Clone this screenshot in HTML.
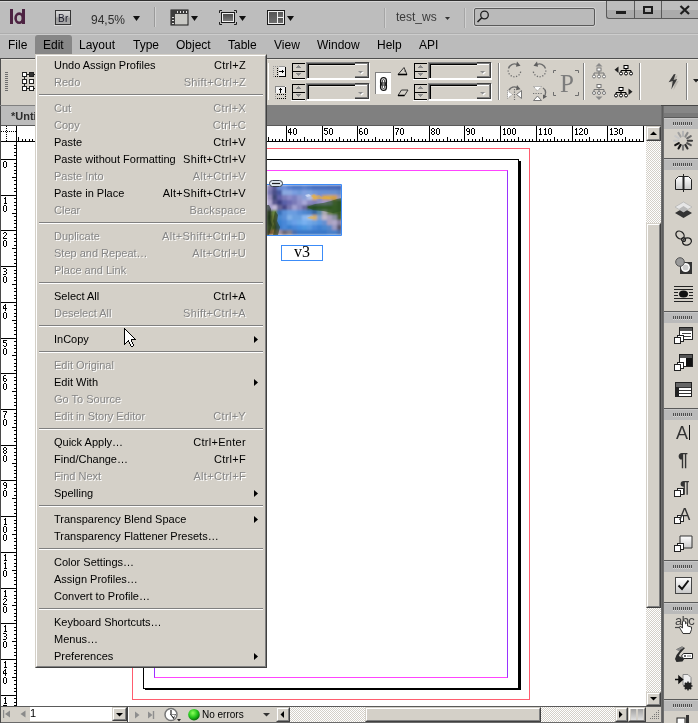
<!DOCTYPE html>
<html><head><meta charset="utf-8">
<style>
*{box-sizing:border-box}
html,body{margin:0;padding:0}
body{will-change:transform;width:698px;height:723px;position:relative;overflow:hidden;background:#fff;font-family:"Liberation Sans",sans-serif;font-size:11px;color:#000}
.a{position:absolute}
.t{position:absolute;white-space:nowrap;line-height:12px}
#title{left:0;top:0;width:698px;height:34px;background:#bdbdbd;border-top:1px solid #2e2e2e}
#menubar{left:0;top:34px;width:698px;height:24px;background:#bbbbbb}
#ctrl{left:0;top:58px;width:698px;height:47px;background:#d4d0c8;border-top:1px solid #646464}
#tabbar{left:0;top:105px;width:661px;height:20px;background:#808080}
#menu{left:35px;top:54px;width:231px;height:614px;background:#d4d0c8}
.mi{position:absolute;left:19px;height:17px;white-space:nowrap;line-height:12px}
.mi .s{position:absolute;left:0;top:2px}
.mi .k{position:absolute;right:-189px;top:2px;text-align:right}
.dis{color:#868686;text-shadow:1px 1px 0 #fff}
.sep{position:absolute;left:4px;width:223px;height:2px;border-top:1px solid #808080;border-bottom:1px solid #fff}
.rl{font-size:9px;line-height:9px;letter-spacing:-0.3px}
</style></head><body>

<!-- TITLE BAR -->
<div id="title" class="a"></div>
<div class="a" style="left:0;top:1px;width:698px;height:1px;background:#d6d6d6"></div>
<div class="a" style="left:0;top:33px;width:698px;height:1px;background:#aeaeae"></div>
<div class="a" style="left:0;top:34px;width:698px;height:1px;background:#cdcdcd"></div>
<svg class="a" style="left:0;top:0" width="40" height="34"><rect x="10" y="9" width="3" height="15" fill="#4d2342"/><rect x="22" y="9" width="3" height="15" fill="#4d2342"/><ellipse cx="19.2" cy="18.2" rx="3.6" ry="4.6" fill="none" stroke="#4d2342" stroke-width="2.6"/></svg>
<div class="a" style="left:55px;top:10px;width:16px;height:15px;border:1px solid #353535;background:linear-gradient(#d8d8d8,#c0c0c0 45%,#9c9c9c 55%,#acacac)"></div>
<div class="a" style="left:54px;top:25px;width:18px;height:1px;background:#d8d8d8"></div>
<div class="t" style="left:58px;top:13px;font-size:10px;color:#1a1a2a;letter-spacing:0.4px">Br</div>
<div class="t" style="left:91px;top:14px;font-size:12px;color:#2e2e2e">94,5%</div>
<svg class="a" style="left:133px;top:16px" width="8" height="6"><path d="M0 0H7L3.5 5Z" fill="#111"/></svg>
<div class="a" style="left:154px;top:7px;width:1px;height:20px;background:#9a9a9a"></div>
<div class="a" style="left:155px;top:7px;width:1px;height:20px;background:#d2d2d2"></div>
<svg class="a" style="left:170px;top:9px" width="20" height="17">
 <rect x="1" y="1" width="17" height="15" fill="#c9c9c5" stroke="#1a1a1a" stroke-width="1"/>
 <rect x="1" y="1" width="17" height="4" fill="#3c3c3c"/>
 <rect x="1" y="1" width="4" height="15" fill="#3c3c3c"/>
 <path d="M7.5 2v2M10.5 2v2M13.5 2v2M16.5 2v2M2 8.5h2M2 11.5h2M2 14.5h2" stroke="#e0e0e0" stroke-width="1"/>
</svg>
<svg class="a" style="left:191px;top:16px" width="8" height="6"><path d="M0 0H7L3.5 5Z" fill="#111"/></svg>
<svg class="a" style="left:219px;top:10px" width="19" height="16">
 <path d="M0.5 3V0.5H3M15 0.5H17.5V3M17.5 12V14.5H15M3 14.5H0.5V12" fill="none" stroke="#222" stroke-width="1"/>
 <rect x="2.5" y="2.5" width="13" height="10" fill="none" stroke="#1a1a1a"/>
 <rect x="3.5" y="3.5" width="11" height="8" fill="none" stroke="#f0f0f0"/>
 <rect x="4" y="4" width="10" height="7" fill="url(#g1)"/>
 <defs><linearGradient id="g1" x1="0" y1="0" x2="0" y2="1"><stop offset="0" stop-color="#4a4a4a"/><stop offset="1" stop-color="#7a7a7a"/></linearGradient></defs>
</svg>
<svg class="a" style="left:239px;top:16px" width="8" height="6"><path d="M0 0H7L3.5 5Z" fill="#111"/></svg>
<svg class="a" style="left:267px;top:10px" width="18" height="16">
 <rect x="0.5" y="0.5" width="17" height="14" fill="#f0f0f0" stroke="#1a1a1a"/>
 <rect x="2" y="2" width="8" height="11" fill="url(#g2)"/>
 <rect x="11" y="2" width="5" height="5" fill="url(#g2)"/>
 <rect x="11" y="8" width="5" height="5" fill="url(#g2)"/>
 <defs><linearGradient id="g2" x1="0" y1="0" x2="0" y2="1"><stop offset="0" stop-color="#555"/><stop offset="1" stop-color="#6e6e6e"/></linearGradient></defs>
</svg>
<svg class="a" style="left:287px;top:16px" width="8" height="6"><path d="M0 0H7L3.5 5Z" fill="#111"/></svg>
<div class="a" style="left:384px;top:8px;width:1px;height:20px;background:#a5a5a5"></div>
<div class="a" style="left:385px;top:8px;width:1px;height:20px;background:#d0d0d0"></div>
<div class="t" style="left:396px;top:11px;font-size:12px;color:#3a3a3a">test_ws</div>
<svg class="a" style="left:445px;top:17px" width="6" height="4"><path d="M0 0H5L2.5 3Z" fill="#333"/></svg>
<div class="a" style="left:464px;top:8px;width:1px;height:20px;background:#a5a5a5"></div>
<div class="a" style="left:465px;top:8px;width:1px;height:20px;background:#d0d0d0"></div>
<div class="a" style="left:473px;top:7px;width:123px;height:20px;border:1px solid #d0d0d0;border-radius:3px"></div>
<div class="a" style="left:474px;top:8px;width:121px;height:18px;border:1px solid #5a5a5a;border-radius:2px;background:#bababa"></div>
<svg class="a" style="left:476px;top:10px" width="14" height="13"><circle cx="8.5" cy="5" r="3.8" fill="none" stroke="#1e1e1e" stroke-width="1.3"/><path d="M5.8 7.8L1.5 12" stroke="#1e1e1e" stroke-width="1.6"/></svg>
<div class="a" style="left:606px;top:0;width:92px;height:19px;border-left:1px solid #5a5a5a;border-bottom:1px solid #5a5a5a;border-bottom-left-radius:3px;background:linear-gradient(#bdbdbd 0,#bdbdbd 57%,#ababab 58%,#ababab)"></div>
<div class="a" style="left:0;top:0;width:698px;height:1px;background:#2e2e2e"></div>
<div class="a" style="left:634px;top:1px;width:1px;height:18px;background:#5a5a5a"></div>
<div class="a" style="left:661px;top:1px;width:1px;height:18px;background:#5a5a5a"></div>
<div class="a" style="left:616px;top:11px;width:10px;height:3px;background:#1e1e1e"></div>
<div class="a" style="left:643px;top:6px;width:10px;height:8px;border:2px solid #1e1e1e"></div>
<svg class="a" style="left:679px;top:5px" width="12" height="10"><path d="M1.5 1L10 9M10 1L1.5 9" stroke="#1e1e1e" stroke-width="2.2"/></svg>

<!-- MENU BAR -->
<div id="menubar" class="a" style="top:35px;height:23px"></div>
<div class="a" style="left:35px;top:35px;width:37px;height:20px;background:#878787;border-radius:3px 3px 0 0"></div>
<div class="t mb" style="left:8px;top:39px;font-size:12px;color:#000">File</div>
<div class="t mb" style="left:43px;top:39px;font-size:12px;color:#000">Edit</div>
<div class="t mb" style="left:79px;top:39px;font-size:12px;color:#000">Layout</div>
<div class="t mb" style="left:133px;top:39px;font-size:12px;color:#000">Type</div>
<div class="t mb" style="left:176px;top:39px;font-size:12px;color:#000">Object</div>
<div class="t mb" style="left:228px;top:39px;font-size:12px;color:#000">Table</div>
<div class="t mb" style="left:274px;top:39px;font-size:12px;color:#000">View</div>
<div class="t mb" style="left:317px;top:39px;font-size:12px;color:#000">Window</div>
<div class="t mb" style="left:377px;top:39px;font-size:12px;color:#000">Help</div>
<div class="t mb" style="left:419px;top:39px;font-size:12px;color:#000">API</div>

<!-- CONTROL PANEL -->
<div class="a" style="left:0;top:58px;width:698px;height:48px;background:#d4d0c8;border-top:1px solid #4e4e4e;border-left:1px solid #4e4e4e;border-bottom:1px solid #484848"></div>
<div class="a" style="left:1px;top:59px;width:697px;height:1px;background:#e6e3dc"></div>
<svg class="a" style="left:5px;top:72px" width="3" height="19"><path d="M0 0.5H3M0 2.5H3M0 4.5H3M0 6.5H3M0 8.5H3M0 10.5H3M0 12.5H3M0 14.5H3M0 16.5H3M0 18.5H3" stroke="#6e6e6e" stroke-width="1"/></svg>
<svg class="a" style="left:21px;top:71px" width="22" height="21" shape-rendering="crispEdges">
 <path d="M6 3h2v1h-2zM3 6h1v2h-1zM3 13h1v2h-1zM6 17h2v1h-2zM13 3h1v1h-1zM13 17h1v1h-1z" fill="#222"/>
 <rect x="1.5" y="1.5" width="4" height="4" fill="#fff" stroke="#222"/>
 <rect x="8.5" y="1.5" width="4" height="4" fill="#333" stroke="#222"/>
 <rect x="1.5" y="8.5" width="4" height="4" fill="#fff" stroke="#222"/>
 <rect x="8.5" y="8.5" width="4" height="4" fill="#fff" stroke="#222"/>
 <rect x="1.5" y="15.5" width="4" height="4" fill="#fff" stroke="#222"/>
 <rect x="8.5" y="15.5" width="4" height="4" fill="#fff" stroke="#222"/>
</svg>
<div class="a" style="left:268px;top:63px;width:1px;height:37px;background:#fff"></div>
<svg class="a" style="left:270px;top:62px" width="20" height="20" shape-rendering="crispEdges"><rect x="9" y="5" width="6" height="10" fill="#f4f4f4"/><path d="M3 4h1v1h-1zM3 6h1v1h-1zM3 8h1v1h-1zM3 10h1v1h-1zM3 12h1v1h-1zM3 14h1v1h-1zM5 4h1v1h-1zM7 4h1v1h-1z" fill="#999"/><path d="M7 6h1v1h-1zM7 8h1v1h-1zM7 10h1v1h-1zM7 12h1v1h-1zM7 14h1v1h-1zM5 14h1v1h-1z" fill="#000"/><rect x="9" y="4" width="6" height="1" fill="#999"/><rect x="15" y="5" width="1" height="10" fill="#000"/><rect x="9" y="14" width="7" height="1" fill="#000"/><rect x="9" y="9" width="4" height="1" fill="#000"/><rect x="12" y="8" width="1" height="3" fill="#000"/><rect x="13" y="9" width="1" height="1" fill="#000"/></svg>
<svg class="a" style="left:270px;top:83px" width="20" height="20" shape-rendering="crispEdges"><rect x="5" y="3" width="11" height="7" fill="#f4f4f4"/><rect x="5" y="3" width="10" height="1" fill="#888"/><rect x="5" y="3" width="1" height="7" fill="#888"/><rect x="15" y="4" width="1" height="6" fill="#000"/><rect x="10" y="5" width="1" height="5" fill="#000"/><rect x="9" y="6" width="3" height="1" fill="#000"/><path d="M7 11h1v1h-1zM9 11h1v1h-1zM11 11h1v1h-1zM13 11h1v1h-1zM15 11h1v1h-1zM15 13h1v1h-1zM7 15h1v1h-1zM9 15h1v1h-1zM11 15h1v1h-1zM13 15h1v1h-1zM15 15h1v1h-1z" fill="#000"/><path d="M5 11h1v1h-1zM5 13h1v1h-1zM5 15h1v1h-1z" fill="#999"/></svg>
<div class="a" style="left:292px;top:63px;width:13px;height:16px;border-left:1px solid #000;border-top:1px solid #000;border-bottom:1px solid #000"></div>
<div class="a" style="left:292px;top:71px;width:13px;height:1px;background:#000"></div>
<div class="a" style="left:291px;top:79px;width:14px;height:1px;background:#fff"></div>
<svg class="a" style="left:296px;top:65px" width="7" height="14" shape-rendering="crispEdges"><path d="M2 0h1v1h-1zM1 1h3v1h-3zM0 2h5v1h-5zM0 8h5v1h-5zM1 9h3v1h-3zM2 10h1v1h-1z" fill="#8a8a8a"/></svg>
<div class="a" style="left:292px;top:84px;width:13px;height:16px;border-left:1px solid #000;border-top:1px solid #000;border-bottom:1px solid #000"></div>
<div class="a" style="left:292px;top:92px;width:13px;height:1px;background:#000"></div>
<div class="a" style="left:291px;top:100px;width:14px;height:1px;background:#fff"></div>
<svg class="a" style="left:296px;top:86px" width="7" height="14" shape-rendering="crispEdges"><path d="M2 0h1v1h-1zM1 1h3v1h-3zM0 2h5v1h-5zM0 8h5v1h-5zM1 9h3v1h-3zM2 10h1v1h-1z" fill="#8a8a8a"/></svg>
<div class="a" style="left:306px;top:62px;width:64px;height:18px;background:#d4d0c8;border-left:1px solid #888;border-top:1px solid #888;border-right:1px solid #fff;border-bottom:2px solid #fff"></div>
<div class="a" style="left:307px;top:63px;width:62px;height:15px;border-left:1px solid #555;border-top:1px solid #555"></div>
<div class="a" style="left:308px;top:64px;width:61px;height:14px;border-left:1px solid #000;border-top:1px solid #000"></div>
<div class="a" style="left:309px;top:65px;width:60px;height:1px;background:#ebe8e1"></div>
<div class="a" style="left:355px;top:62px;width:14px;height:16px;background:#d4d0c8;border-top:1px solid #404040;border-right:1px solid #404040;border-bottom:1px solid #404040"></div>
<div class="a" style="left:355px;top:63px;width:13px;height:14px;border-top:1px solid #808080;border-right:1px solid #808080;border-bottom:1px solid #808080"></div>
<div class="a" style="left:355px;top:64px;width:12px;height:1px;background:#fff"></div>
<svg class="a" style="left:358px;top:71px" width="7" height="5"><path d="M1 1H6L3.5 3.5Z" fill="#fff"/><path d="M0 0H5L2.5 2.5Z" fill="#8e8e8e"/></svg>
<div class="a" style="left:306px;top:83px;width:64px;height:18px;background:#d4d0c8;border-left:1px solid #888;border-top:1px solid #888;border-right:1px solid #fff;border-bottom:2px solid #fff"></div>
<div class="a" style="left:307px;top:84px;width:62px;height:15px;border-left:1px solid #555;border-top:1px solid #555"></div>
<div class="a" style="left:308px;top:85px;width:61px;height:14px;border-left:1px solid #000;border-top:1px solid #000"></div>
<div class="a" style="left:309px;top:86px;width:60px;height:1px;background:#ebe8e1"></div>
<div class="a" style="left:355px;top:83px;width:14px;height:16px;background:#d4d0c8;border-top:1px solid #404040;border-right:1px solid #404040;border-bottom:1px solid #404040"></div>
<div class="a" style="left:355px;top:84px;width:13px;height:14px;border-top:1px solid #808080;border-right:1px solid #808080;border-bottom:1px solid #808080"></div>
<div class="a" style="left:355px;top:85px;width:12px;height:1px;background:#fff"></div>
<svg class="a" style="left:358px;top:92px" width="7" height="5"><path d="M1 1H6L3.5 3.5Z" fill="#fff"/><path d="M0 0H5L2.5 2.5Z" fill="#8e8e8e"/></svg>
<div class="a" style="left:375px;top:72px;width:16px;height:22px;background:#fff;border-left:1px solid #808080;border-top:1px solid #808080"></div>
<svg class="a" style="left:378px;top:75px" width="11" height="18"><rect x="2.6" y="2.6" width="5.8" height="8" rx="2.9" fill="none" stroke="#111" stroke-width="1.3"/><rect x="2.6" y="7.4" width="5.8" height="8" rx="2.9" fill="none" stroke="#111" stroke-width="1.3"/><rect x="4.3" y="4.6" width="2.4" height="9" rx="1.2" fill="#fff" stroke="#333" stroke-width="1"/><path d="M5.5 7V11" stroke="#777" stroke-width="0.9"/></svg>
<svg class="a" style="left:397px;top:66px" width="12" height="10"><path d="M1 8.5H10L7 1.5Z" fill="none" stroke="#333" stroke-width="1"/><path d="M1 8.5H10" stroke="#000" stroke-width="1.6"/><circle cx="8" cy="5" r="0.6" fill="#000"/></svg>
<svg class="a" style="left:397px;top:89px" width="12" height="8"><path d="M1 6.5L4.5 1H11L7.5 6.5Z" fill="none" stroke="#333" stroke-width="1"/><path d="M1 6.5H7.5" stroke="#000" stroke-width="1.5"/></svg>
<div class="a" style="left:414px;top:63px;width:13px;height:16px;border-left:1px solid #000;border-top:1px solid #000;border-bottom:1px solid #000"></div>
<div class="a" style="left:414px;top:71px;width:13px;height:1px;background:#000"></div>
<div class="a" style="left:413px;top:79px;width:14px;height:1px;background:#fff"></div>
<svg class="a" style="left:418px;top:65px" width="7" height="14" shape-rendering="crispEdges"><path d="M2 0h1v1h-1zM1 1h3v1h-3zM0 2h5v1h-5zM0 8h5v1h-5zM1 9h3v1h-3zM2 10h1v1h-1z" fill="#8a8a8a"/></svg>
<div class="a" style="left:414px;top:84px;width:13px;height:16px;border-left:1px solid #000;border-top:1px solid #000;border-bottom:1px solid #000"></div>
<div class="a" style="left:414px;top:92px;width:13px;height:1px;background:#000"></div>
<div class="a" style="left:413px;top:100px;width:14px;height:1px;background:#fff"></div>
<svg class="a" style="left:418px;top:86px" width="7" height="14" shape-rendering="crispEdges"><path d="M2 0h1v1h-1zM1 1h3v1h-3zM0 2h5v1h-5zM0 8h5v1h-5zM1 9h3v1h-3zM2 10h1v1h-1z" fill="#8a8a8a"/></svg>
<div class="a" style="left:428px;top:62px;width:64px;height:18px;background:#d4d0c8;border-left:1px solid #888;border-top:1px solid #888;border-right:1px solid #fff;border-bottom:2px solid #fff"></div>
<div class="a" style="left:429px;top:63px;width:62px;height:15px;border-left:1px solid #555;border-top:1px solid #555"></div>
<div class="a" style="left:430px;top:64px;width:61px;height:14px;border-left:1px solid #000;border-top:1px solid #000"></div>
<div class="a" style="left:431px;top:65px;width:60px;height:1px;background:#ebe8e1"></div>
<div class="a" style="left:477px;top:62px;width:14px;height:16px;background:#d4d0c8;border-top:1px solid #404040;border-right:1px solid #404040;border-bottom:1px solid #404040"></div>
<div class="a" style="left:477px;top:63px;width:13px;height:14px;border-top:1px solid #808080;border-right:1px solid #808080;border-bottom:1px solid #808080"></div>
<div class="a" style="left:477px;top:64px;width:12px;height:1px;background:#fff"></div>
<svg class="a" style="left:480px;top:71px" width="7" height="5"><path d="M1 1H6L3.5 3.5Z" fill="#fff"/><path d="M0 0H5L2.5 2.5Z" fill="#8e8e8e"/></svg>
<div class="a" style="left:428px;top:83px;width:64px;height:18px;background:#d4d0c8;border-left:1px solid #888;border-top:1px solid #888;border-right:1px solid #fff;border-bottom:2px solid #fff"></div>
<div class="a" style="left:429px;top:84px;width:62px;height:15px;border-left:1px solid #555;border-top:1px solid #555"></div>
<div class="a" style="left:430px;top:85px;width:61px;height:14px;border-left:1px solid #000;border-top:1px solid #000"></div>
<div class="a" style="left:431px;top:86px;width:60px;height:1px;background:#ebe8e1"></div>
<div class="a" style="left:477px;top:83px;width:14px;height:16px;background:#d4d0c8;border-top:1px solid #404040;border-right:1px solid #404040;border-bottom:1px solid #404040"></div>
<div class="a" style="left:477px;top:84px;width:13px;height:14px;border-top:1px solid #808080;border-right:1px solid #808080;border-bottom:1px solid #808080"></div>
<div class="a" style="left:477px;top:85px;width:12px;height:1px;background:#fff"></div>
<svg class="a" style="left:480px;top:92px" width="7" height="5"><path d="M1 1H6L3.5 3.5Z" fill="#fff"/><path d="M0 0H5L2.5 2.5Z" fill="#8e8e8e"/></svg>
<div class="a" style="left:498px;top:63px;width:1px;height:37px;background:#808080"></div><div class="a" style="left:499px;top:63px;width:1px;height:37px;background:#fff"></div>
<svg class="a" style="left:504px;top:60px" width="46" height="42">
 <g fill="none" stroke="#6e6e6e">
  <path d="M4.5 8.5A6.3 6.3 0 0 1 13 4.4" stroke-width="1.4"/>
  <path d="M4.2 10.5A6.3 6.3 0 0 0 16.8 10.5" stroke-width="1.3" stroke-dasharray="1.2 1.6"/>
  <path d="M41.5 8.5A6.3 6.3 0 0 0 33 4.4" stroke-width="1.4"/>
  <path d="M41.8 10.5A6.3 6.3 0 0 1 29.2 10.5" stroke-width="1.3" stroke-dasharray="1.2 1.6"/>
  <path d="M5 30A6.5 6.5 0 0 1 13 27.5" stroke-width="1.4"/>
  <path d="M10.5 29V40" stroke-width="1.2" stroke-dasharray="1.2 1.3"/>
  <path d="M29 33.5H38" stroke-width="1.2" stroke-dasharray="1.2 1.3"/>
  <path d="M39 28A5.5 5.5 0 0 1 39.5 37" stroke-width="1.4"/>
 </g>
 <path d="M13 1.5L16.5 5.8L12 6.8Z" fill="#5e5e5e"/>
 <path d="M33 1.5L29.5 5.8L34 6.8Z" fill="#5e5e5e"/>
 <path d="M13 25L16.5 29.2L12 30.2Z" fill="#5e5e5e"/>
 <path d="M39 34.5L43 36.5L39 39Z" fill="#5e5e5e"/>
 <path d="M3.5 30.5L8.5 34.5L3.5 38.5Z" fill="#fff" stroke="#8a8a8a" stroke-dasharray="1 1"/>
 <path d="M17.5 30.5L12.5 34.5L17.5 38.5Z" fill="#fff" stroke="#777"/>
 <path d="M29.5 26.5H37.5L33.5 31Z" fill="#fff" stroke="#8a8a8a" stroke-dasharray="1 1"/>
 <path d="M29.5 40.5H37.5L33.5 36Z" fill="#fff" stroke="#777"/>
</svg>
<svg class="a" style="left:553px;top:70px" width="26" height="26"><path d="M0.5 3V0.5H3M22 0.5H25.5V3M25.5 22V25.5H22M3 25.5H0.5V22" fill="none" stroke="#6e6e6e" stroke-width="1"/></svg>
<div class="t" style="left:560px;top:71px;font-family:'Liberation Serif',serif;font-size:25px;line-height:25px;color:#7c7c7c">P</div>
<div class="a" style="left:583px;top:63px;width:1px;height:37px;background:#808080"></div><div class="a" style="left:584px;top:63px;width:1px;height:37px;background:#fff"></div>
<svg class="a" style="left:592px;top:62px" width="14" height="17"><path d="M3.5 4.5L7 1L10.5 4.5Z" fill="#8a8a8a"/><rect x="5" y="6" width="4" height="3" fill="#fff" stroke="#777"/><path d="M7 9V11M2 11H12M2 11V13M7 11V13M12 11V13" stroke="#777"/><rect x="0.5" y="13" width="3" height="3" rx="1.5" fill="#fff" stroke="#777"/><rect x="5.5" y="13" width="3" height="3" rx="1.5" fill="#fff" stroke="#777"/><rect x="10.5" y="13" width="3" height="3" rx="1.5" fill="#fff" stroke="#777"/></svg>
<svg class="a" style="left:592px;top:84px" width="14" height="17"><rect x="5" y="0.5" width="4" height="3" fill="#fff" stroke="#777"/><path d="M7 3.5V5.5M2 5.5H12M2 5.5V7.5M7 5.5V7.5M12 5.5V7.5" stroke="#777"/><rect x="0.5" y="7.5" width="3" height="3" rx="1.5" fill="#fff" stroke="#777"/><rect x="5.5" y="7.5" width="3" height="3" rx="1.5" fill="#fff" stroke="#777"/><rect x="10.5" y="7.5" width="3" height="3" rx="1.5" fill="#fff" stroke="#777"/><path d="M3.5 12.5L7 16L10.5 12.5Z" fill="#8a8a8a"/></svg>
<svg class="a" style="left:614px;top:65px" width="19" height="11"><path d="M4.5 1.5V8L0.5 4.8Z" fill="#222"/><rect x="10" y="0.5" width="4" height="3" fill="#fff" stroke="#000"/><path d="M12 3.5V5.5M7 5.5H17M7 5.5V7M12 5.5V7M17 5.5V7" stroke="#000"/><rect x="5.5" y="7" width="3" height="3" rx="1.5" fill="#fff" stroke="#000"/><rect x="10.5" y="7" width="3" height="3" rx="1.5" fill="#fff" stroke="#000"/><rect x="15.5" y="7" width="3" height="3" rx="1.5" fill="#fff" stroke="#000"/></svg>
<svg class="a" style="left:614px;top:87px" width="19" height="11"><rect x="5" y="0.5" width="4" height="3" fill="#fff" stroke="#000"/><path d="M7 3.5V5.5M2 5.5H12M2 5.5V7M7 5.5V7M12 5.5V7" stroke="#000"/><rect x="0.5" y="7" width="3" height="3" rx="1.5" fill="#fff" stroke="#000"/><rect x="5.5" y="7" width="3" height="3" rx="1.5" fill="#fff" stroke="#000"/><rect x="10.5" y="7" width="3" height="3" rx="1.5" fill="#fff" stroke="#000"/><path d="M14.5 1.5V8L18.5 4.8Z" fill="#222"/></svg>
<div class="a" style="left:639px;top:63px;width:1px;height:37px;background:#808080"></div><div class="a" style="left:640px;top:63px;width:1px;height:37px;background:#fff"></div>
<svg class="a" style="left:667px;top:73px" width="13" height="18"><path d="M7.8 1.8L2.8 9.4L6.6 8.4L5.4 16.6L10.8 6.8L7.4 7.6L9.6 1.6Z" fill="#000" opacity="0.12" transform="translate(1,1)"/><path d="M6.8 1.2L1.6 9.3L5.8 8L4.3 16.4L10.2 5.9L6.6 7L8.6 1Z" fill="#3a3a3a"/></svg>
<div class="a" style="left:686px;top:63px;width:1px;height:37px;background:#808080"></div><div class="a" style="left:687px;top:63px;width:1px;height:37px;background:#fff"></div>
<svg class="a" style="left:693px;top:79px" width="6" height="4"><path d="M0 0H6L3 3.5Z" fill="#222"/></svg>

<!-- TAB BAR -->
<div id="tabbar" class="a"></div>

<!-- CANVAS / RULERS -->
<div class="a" style="left:0;top:106px;width:1px;height:617px;background:#4a4a4a"></div>
<div class="a" style="left:1px;top:106px;width:40px;height:19px;background:#bcbcbc"></div>
<div class="a" style="left:1px;top:125px;width:660px;height:1px;background:#5a5a5a"></div>
<div class="t" style="left:11px;top:110px;font-size:11px;font-weight:bold;color:#2e2e2e">*Untitled-1 @ 94%</div>
<svg class="a" style="left:0;top:126px" width="646" height="16" shape-rendering="crispEdges">
<rect x="17" y="0" width="628" height="16" fill="#fff"/>
<rect x="17" y="15" width="627" height="1" fill="#000"/>
<rect x="643" y="0" width="1" height="16" fill="#000"/>
<path d="M18.5 11V15 M22.5 13V15 M25.5 13V15 M29.5 13V15 M32.5 13V15 M36.5 0V15 M39.5 13V15 M43.5 13V15 M47.5 13V15 M50.5 13V15 M54.5 11V15 M57.5 13V15 M61.5 13V15 M64.5 13V15 M68.5 13V15 M72.5 0V15 M75.5 13V15 M79.5 13V15 M82.5 13V15 M86.5 13V15 M89.5 11V15 M93.5 13V15 M97.5 13V15 M100.5 13V15 M104.5 13V15 M107.5 0V15 M111.5 13V15 M114.5 13V15 M118.5 13V15 M122.5 13V15 M125.5 11V15 M129.5 13V15 M132.5 13V15 M136.5 13V15 M139.5 13V15 M143.5 0V15 M147.5 13V15 M150.5 13V15 M154.5 13V15 M157.5 13V15 M161.5 11V15 M164.5 13V15 M168.5 13V15 M172.5 13V15 M175.5 13V15 M179.5 0V15 M182.5 13V15 M186.5 13V15 M189.5 13V15 M193.5 13V15 M197.5 11V15 M200.5 13V15 M204.5 13V15 M207.5 13V15 M211.5 13V15 M214.5 0V15 M218.5 13V15 M222.5 13V15 M225.5 13V15 M229.5 13V15 M232.5 11V15 M236.5 13V15 M239.5 13V15 M243.5 13V15 M247.5 13V15 M250.5 0V15 M254.5 13V15 M257.5 13V15 M261.5 13V15 M264.5 13V15 M268.5 11V15 M272.5 13V15 M275.5 13V15 M279.5 13V15 M282.5 13V15 M286.5 0V15 M289.5 13V15 M293.5 13V15 M297.5 13V15 M300.5 13V15 M304.5 11V15 M307.5 13V15 M311.5 13V15 M314.5 13V15 M318.5 13V15 M322.5 0V15 M325.5 13V15 M329.5 13V15 M332.5 13V15 M336.5 13V15 M339.5 11V15 M343.5 13V15 M347.5 13V15 M350.5 13V15 M354.5 13V15 M357.5 0V15 M361.5 13V15 M364.5 13V15 M368.5 13V15 M372.5 13V15 M375.5 11V15 M379.5 13V15 M382.5 13V15 M386.5 13V15 M389.5 13V15 M393.5 0V15 M397.5 13V15 M400.5 13V15 M404.5 13V15 M407.5 13V15 M411.5 11V15 M414.5 13V15 M418.5 13V15 M422.5 13V15 M425.5 13V15 M429.5 0V15 M432.5 13V15 M436.5 13V15 M439.5 13V15 M443.5 13V15 M447.5 11V15 M450.5 13V15 M454.5 13V15 M457.5 13V15 M461.5 13V15 M464.5 0V15 M468.5 13V15 M472.5 13V15 M475.5 13V15 M479.5 13V15 M482.5 11V15 M486.5 13V15 M489.5 13V15 M493.5 13V15 M497.5 13V15 M500.5 0V15 M504.5 13V15 M507.5 13V15 M511.5 13V15 M514.5 13V15 M518.5 11V15 M522.5 13V15 M525.5 13V15 M529.5 13V15 M532.5 13V15 M536.5 0V15 M539.5 13V15 M543.5 13V15 M547.5 13V15 M550.5 13V15 M554.5 11V15 M557.5 13V15 M561.5 13V15 M564.5 13V15 M568.5 13V15 M572.5 0V15 M575.5 13V15 M579.5 13V15 M582.5 13V15 M586.5 13V15 M589.5 11V15 M593.5 13V15 M597.5 13V15 M600.5 13V15 M604.5 13V15 M607.5 0V15 M611.5 13V15 M614.5 13V15 M618.5 13V15 M622.5 13V15 M625.5 11V15 M629.5 13V15 M632.5 13V15 M636.5 13V15 M639.5 13V15 M643.5 0V15" stroke="#000" stroke-width="1"/>
</svg>
<svg class="a" style="left:0;top:0" width="646" height="142" shape-rendering="crispEdges"><path d="M38 131h3v1h-3zM43 128h3v1h-3zM46 129h1v1h-1zM46 130h1v1h-1zM44 131h2v1h-2zM46 132h1v1h-1zM46 133h1v1h-1zM43 134h3v1h-3zM49 128h2v1h-2zM48 129h1v1h-1zM51 129h1v1h-1zM48 130h1v1h-1zM51 130h1v1h-1zM48 131h1v1h-1zM51 131h1v1h-1zM48 132h1v1h-1zM51 132h1v1h-1zM48 133h1v1h-1zM51 133h1v1h-1zM49 134h2v1h-2zM74 131h3v1h-3zM80 128h2v1h-2zM79 129h1v1h-1zM82 129h1v1h-1zM82 130h1v1h-1zM81 131h1v1h-1zM80 132h1v1h-1zM79 133h1v1h-1zM79 134h4v1h-4zM85 128h2v1h-2zM84 129h1v1h-1zM87 129h1v1h-1zM84 130h1v1h-1zM87 130h1v1h-1zM84 131h1v1h-1zM87 131h1v1h-1zM84 132h1v1h-1zM87 132h1v1h-1zM84 133h1v1h-1zM87 133h1v1h-1zM85 134h2v1h-2zM109 131h3v1h-3zM116 128h1v1h-1zM115 129h2v1h-2zM116 130h1v1h-1zM116 131h1v1h-1zM116 132h1v1h-1zM116 133h1v1h-1zM115 134h3v1h-3zM120 128h2v1h-2zM119 129h1v1h-1zM122 129h1v1h-1zM119 130h1v1h-1zM122 130h1v1h-1zM119 131h1v1h-1zM122 131h1v1h-1zM119 132h1v1h-1zM122 132h1v1h-1zM119 133h1v1h-1zM122 133h1v1h-1zM120 134h2v1h-2zM146 128h2v1h-2zM145 129h1v1h-1zM148 129h1v1h-1zM145 130h1v1h-1zM148 130h1v1h-1zM145 131h1v1h-1zM148 131h1v1h-1zM145 132h1v1h-1zM148 132h1v1h-1zM145 133h1v1h-1zM148 133h1v1h-1zM146 134h2v1h-2zM183 128h1v1h-1zM182 129h2v1h-2zM183 130h1v1h-1zM183 131h1v1h-1zM183 132h1v1h-1zM183 133h1v1h-1zM182 134h3v1h-3zM187 128h2v1h-2zM186 129h1v1h-1zM189 129h1v1h-1zM186 130h1v1h-1zM189 130h1v1h-1zM186 131h1v1h-1zM189 131h1v1h-1zM186 132h1v1h-1zM189 132h1v1h-1zM186 133h1v1h-1zM189 133h1v1h-1zM187 134h2v1h-2zM217 128h2v1h-2zM216 129h1v1h-1zM219 129h1v1h-1zM219 130h1v1h-1zM218 131h1v1h-1zM217 132h1v1h-1zM216 133h1v1h-1zM216 134h4v1h-4zM222 128h2v1h-2zM221 129h1v1h-1zM224 129h1v1h-1zM221 130h1v1h-1zM224 130h1v1h-1zM221 131h1v1h-1zM224 131h1v1h-1zM221 132h1v1h-1zM224 132h1v1h-1zM221 133h1v1h-1zM224 133h1v1h-1zM222 134h2v1h-2zM252 128h3v1h-3zM255 129h1v1h-1zM255 130h1v1h-1zM253 131h2v1h-2zM255 132h1v1h-1zM255 133h1v1h-1zM252 134h3v1h-3zM258 128h2v1h-2zM257 129h1v1h-1zM260 129h1v1h-1zM257 130h1v1h-1zM260 130h1v1h-1zM257 131h1v1h-1zM260 131h1v1h-1zM257 132h1v1h-1zM260 132h1v1h-1zM257 133h1v1h-1zM260 133h1v1h-1zM258 134h2v1h-2zM290 128h1v1h-1zM289 129h2v1h-2zM288 130h1v1h-1zM290 130h1v1h-1zM288 131h1v1h-1zM290 131h1v1h-1zM288 132h4v1h-4zM290 133h1v1h-1zM290 134h1v1h-1zM294 128h2v1h-2zM293 129h1v1h-1zM296 129h1v1h-1zM293 130h1v1h-1zM296 130h1v1h-1zM293 131h1v1h-1zM296 131h1v1h-1zM293 132h1v1h-1zM296 132h1v1h-1zM293 133h1v1h-1zM296 133h1v1h-1zM294 134h2v1h-2zM324 128h4v1h-4zM324 129h1v1h-1zM324 130h3v1h-3zM327 131h1v1h-1zM327 132h1v1h-1zM324 133h1v1h-1zM327 133h1v1h-1zM325 134h2v1h-2zM330 128h2v1h-2zM329 129h1v1h-1zM332 129h1v1h-1zM329 130h1v1h-1zM332 130h1v1h-1zM329 131h1v1h-1zM332 131h1v1h-1zM329 132h1v1h-1zM332 132h1v1h-1zM329 133h1v1h-1zM332 133h1v1h-1zM330 134h2v1h-2zM360 128h2v1h-2zM359 129h1v1h-1zM359 130h1v1h-1zM359 131h3v1h-3zM359 132h1v1h-1zM362 132h1v1h-1zM359 133h1v1h-1zM362 133h1v1h-1zM360 134h2v1h-2zM365 128h2v1h-2zM364 129h1v1h-1zM367 129h1v1h-1zM364 130h1v1h-1zM367 130h1v1h-1zM364 131h1v1h-1zM367 131h1v1h-1zM364 132h1v1h-1zM367 132h1v1h-1zM364 133h1v1h-1zM367 133h1v1h-1zM365 134h2v1h-2zM395 128h4v1h-4zM398 129h1v1h-1zM397 130h1v1h-1zM397 131h1v1h-1zM396 132h1v1h-1zM396 133h1v1h-1zM396 134h1v1h-1zM401 128h2v1h-2zM400 129h1v1h-1zM403 129h1v1h-1zM400 130h1v1h-1zM403 130h1v1h-1zM400 131h1v1h-1zM403 131h1v1h-1zM400 132h1v1h-1zM403 132h1v1h-1zM400 133h1v1h-1zM403 133h1v1h-1zM401 134h2v1h-2zM432 128h2v1h-2zM431 129h1v1h-1zM434 129h1v1h-1zM431 130h1v1h-1zM434 130h1v1h-1zM432 131h2v1h-2zM431 132h1v1h-1zM434 132h1v1h-1zM431 133h1v1h-1zM434 133h1v1h-1zM432 134h2v1h-2zM437 128h2v1h-2zM436 129h1v1h-1zM439 129h1v1h-1zM436 130h1v1h-1zM439 130h1v1h-1zM436 131h1v1h-1zM439 131h1v1h-1zM436 132h1v1h-1zM439 132h1v1h-1zM436 133h1v1h-1zM439 133h1v1h-1zM437 134h2v1h-2zM467 128h2v1h-2zM466 129h1v1h-1zM469 129h1v1h-1zM466 130h1v1h-1zM469 130h1v1h-1zM467 131h3v1h-3zM469 132h1v1h-1zM469 133h1v1h-1zM467 134h2v1h-2zM472 128h2v1h-2zM471 129h1v1h-1zM474 129h1v1h-1zM471 130h1v1h-1zM474 130h1v1h-1zM471 131h1v1h-1zM474 131h1v1h-1zM471 132h1v1h-1zM474 132h1v1h-1zM471 133h1v1h-1zM474 133h1v1h-1zM472 134h2v1h-2zM504 128h1v1h-1zM503 129h2v1h-2zM504 130h1v1h-1zM504 131h1v1h-1zM504 132h1v1h-1zM504 133h1v1h-1zM503 134h3v1h-3zM508 128h2v1h-2zM507 129h1v1h-1zM510 129h1v1h-1zM507 130h1v1h-1zM510 130h1v1h-1zM507 131h1v1h-1zM510 131h1v1h-1zM507 132h1v1h-1zM510 132h1v1h-1zM507 133h1v1h-1zM510 133h1v1h-1zM508 134h2v1h-2zM513 128h2v1h-2zM512 129h1v1h-1zM515 129h1v1h-1zM512 130h1v1h-1zM515 130h1v1h-1zM512 131h1v1h-1zM515 131h1v1h-1zM512 132h1v1h-1zM515 132h1v1h-1zM512 133h1v1h-1zM515 133h1v1h-1zM513 134h2v1h-2zM540 128h1v1h-1zM539 129h2v1h-2zM540 130h1v1h-1zM540 131h1v1h-1zM540 132h1v1h-1zM540 133h1v1h-1zM539 134h3v1h-3zM545 128h1v1h-1zM544 129h2v1h-2zM545 130h1v1h-1zM545 131h1v1h-1zM545 132h1v1h-1zM545 133h1v1h-1zM544 134h3v1h-3zM549 128h2v1h-2zM548 129h1v1h-1zM551 129h1v1h-1zM548 130h1v1h-1zM551 130h1v1h-1zM548 131h1v1h-1zM551 131h1v1h-1zM548 132h1v1h-1zM551 132h1v1h-1zM548 133h1v1h-1zM551 133h1v1h-1zM549 134h2v1h-2zM576 128h1v1h-1zM575 129h2v1h-2zM576 130h1v1h-1zM576 131h1v1h-1zM576 132h1v1h-1zM576 133h1v1h-1zM575 134h3v1h-3zM580 128h2v1h-2zM579 129h1v1h-1zM582 129h1v1h-1zM582 130h1v1h-1zM581 131h1v1h-1zM580 132h1v1h-1zM579 133h1v1h-1zM579 134h4v1h-4zM585 128h2v1h-2zM584 129h1v1h-1zM587 129h1v1h-1zM584 130h1v1h-1zM587 130h1v1h-1zM584 131h1v1h-1zM587 131h1v1h-1zM584 132h1v1h-1zM587 132h1v1h-1zM584 133h1v1h-1zM587 133h1v1h-1zM585 134h2v1h-2zM611 128h1v1h-1zM610 129h2v1h-2zM611 130h1v1h-1zM611 131h1v1h-1zM611 132h1v1h-1zM611 133h1v1h-1zM610 134h3v1h-3zM614 128h3v1h-3zM617 129h1v1h-1zM617 130h1v1h-1zM615 131h2v1h-2zM617 132h1v1h-1zM617 133h1v1h-1zM614 134h3v1h-3zM620 128h2v1h-2zM619 129h1v1h-1zM622 129h1v1h-1zM619 130h1v1h-1zM622 130h1v1h-1zM619 131h1v1h-1zM622 131h1v1h-1zM619 132h1v1h-1zM622 132h1v1h-1zM619 133h1v1h-1zM622 133h1v1h-1zM620 134h2v1h-2z" fill="#000"/></svg>
<div class="a" style="left:1px;top:126px;width:16px;height:16px;background:#fff;border-right:1px solid #000;border-bottom:1px solid #000"></div>
<svg class="a" style="left:1px;top:126px" width="15" height="15" shape-rendering="crispEdges"><path d="M5.5 0V15M0 5.5H15" stroke="#000" stroke-dasharray="1 1" fill="none"/><path d="M5 4h1v1h-1zM4 5h1v1h-1zM6 5h1v1h-1zM5 6h1v1h-1z" fill="#000"/><rect x="5" y="5" width="1" height="1" fill="#fff"/></svg>
<svg class="a" style="left:0;top:142px" width="17" height="564" shape-rendering="crispEdges">
<rect x="1" y="0" width="15" height="564" fill="#fff"/>
<rect x="16" y="0" width="1" height="564" fill="#000"/>
<path d="M14 3.5H16 M14 6.5H16 M14 10.5H16 M14 13.5H16 M1 17.5H16 M14 21.5H16 M14 24.5H16 M14 28.5H16 M14 31.5H16 M12 35.5H16 M14 38.5H16 M14 42.5H16 M14 46.5H16 M14 49.5H16 M1 53.5H16 M14 56.5H16 M14 60.5H16 M14 63.5H16 M14 67.5H16 M12 71.5H16 M14 74.5H16 M14 78.5H16 M14 81.5H16 M14 85.5H16 M1 88.5H16 M14 92.5H16 M14 96.5H16 M14 99.5H16 M14 103.5H16 M12 106.5H16 M14 110.5H16 M14 113.5H16 M14 117.5H16 M14 121.5H16 M1 124.5H16 M14 128.5H16 M14 131.5H16 M14 135.5H16 M14 138.5H16 M12 142.5H16 M14 146.5H16 M14 149.5H16 M14 153.5H16 M14 156.5H16 M1 160.5H16 M14 163.5H16 M14 167.5H16 M14 171.5H16 M14 174.5H16 M12 178.5H16 M14 181.5H16 M14 185.5H16 M14 188.5H16 M14 192.5H16 M1 196.5H16 M14 199.5H16 M14 203.5H16 M14 206.5H16 M14 210.5H16 M12 213.5H16 M14 217.5H16 M14 221.5H16 M14 224.5H16 M14 228.5H16 M1 231.5H16 M14 235.5H16 M14 238.5H16 M14 242.5H16 M14 246.5H16 M12 249.5H16 M14 253.5H16 M14 256.5H16 M14 260.5H16 M14 263.5H16 M1 267.5H16 M14 271.5H16 M14 274.5H16 M14 278.5H16 M14 281.5H16 M12 285.5H16 M14 288.5H16 M14 292.5H16 M14 296.5H16 M14 299.5H16 M1 303.5H16 M14 306.5H16 M14 310.5H16 M14 313.5H16 M14 317.5H16 M12 321.5H16 M14 324.5H16 M14 328.5H16 M14 331.5H16 M14 335.5H16 M1 338.5H16 M14 342.5H16 M14 346.5H16 M14 349.5H16 M14 353.5H16 M12 356.5H16 M14 360.5H16 M14 363.5H16 M14 367.5H16 M14 371.5H16 M1 374.5H16 M14 378.5H16 M14 381.5H16 M14 385.5H16 M14 388.5H16 M12 392.5H16 M14 396.5H16 M14 399.5H16 M14 403.5H16 M14 406.5H16 M1 410.5H16 M14 413.5H16 M14 417.5H16 M14 421.5H16 M14 424.5H16 M12 428.5H16 M14 431.5H16 M14 435.5H16 M14 438.5H16 M14 442.5H16 M1 446.5H16 M14 449.5H16 M14 453.5H16 M14 456.5H16 M14 460.5H16 M12 463.5H16 M14 467.5H16 M14 471.5H16 M14 474.5H16 M14 478.5H16 M1 481.5H16 M14 485.5H16 M14 488.5H16 M14 492.5H16 M14 496.5H16 M12 499.5H16 M14 503.5H16 M14 506.5H16 M14 510.5H16 M14 513.5H16 M1 517.5H16 M14 521.5H16 M14 524.5H16 M14 528.5H16 M14 531.5H16 M12 535.5H16 M14 538.5H16 M14 542.5H16 M14 546.5H16 M14 549.5H16 M1 553.5H16 M14 556.5H16 M14 560.5H16 M14 563.5H16" stroke="#000" stroke-width="1"/>
</svg>
<svg class="a" style="left:0;top:0" width="17" height="706" shape-rendering="crispEdges"><path d="M4 161h2v1h-2zM3 162h1v1h-1zM6 162h1v1h-1zM3 163h1v1h-1zM6 163h1v1h-1zM3 164h1v1h-1zM6 164h1v1h-1zM3 165h1v1h-1zM6 165h1v1h-1zM3 166h1v1h-1zM6 166h1v1h-1zM4 167h2v1h-2zM5 197h1v1h-1zM4 198h2v1h-2zM5 199h1v1h-1zM5 200h1v1h-1zM5 201h1v1h-1zM5 202h1v1h-1zM4 203h3v1h-3zM4 205h2v1h-2zM3 206h1v1h-1zM6 206h1v1h-1zM3 207h1v1h-1zM6 207h1v1h-1zM3 208h1v1h-1zM6 208h1v1h-1zM3 209h1v1h-1zM6 209h1v1h-1zM3 210h1v1h-1zM6 210h1v1h-1zM4 211h2v1h-2zM4 232h2v1h-2zM3 233h1v1h-1zM6 233h1v1h-1zM6 234h1v1h-1zM5 235h1v1h-1zM4 236h1v1h-1zM3 237h1v1h-1zM3 238h4v1h-4zM4 240h2v1h-2zM3 241h1v1h-1zM6 241h1v1h-1zM3 242h1v1h-1zM6 242h1v1h-1zM3 243h1v1h-1zM6 243h1v1h-1zM3 244h1v1h-1zM6 244h1v1h-1zM3 245h1v1h-1zM6 245h1v1h-1zM4 246h2v1h-2zM3 268h3v1h-3zM6 269h1v1h-1zM6 270h1v1h-1zM4 271h2v1h-2zM6 272h1v1h-1zM6 273h1v1h-1zM3 274h3v1h-3zM4 276h2v1h-2zM3 277h1v1h-1zM6 277h1v1h-1zM3 278h1v1h-1zM6 278h1v1h-1zM3 279h1v1h-1zM6 279h1v1h-1zM3 280h1v1h-1zM6 280h1v1h-1zM3 281h1v1h-1zM6 281h1v1h-1zM4 282h2v1h-2zM5 304h1v1h-1zM4 305h2v1h-2zM3 306h1v1h-1zM5 306h1v1h-1zM3 307h1v1h-1zM5 307h1v1h-1zM3 308h4v1h-4zM5 309h1v1h-1zM5 310h1v1h-1zM4 312h2v1h-2zM3 313h1v1h-1zM6 313h1v1h-1zM3 314h1v1h-1zM6 314h1v1h-1zM3 315h1v1h-1zM6 315h1v1h-1zM3 316h1v1h-1zM6 316h1v1h-1zM3 317h1v1h-1zM6 317h1v1h-1zM4 318h2v1h-2zM3 340h4v1h-4zM3 341h1v1h-1zM3 342h3v1h-3zM6 343h1v1h-1zM6 344h1v1h-1zM3 345h1v1h-1zM6 345h1v1h-1zM4 346h2v1h-2zM4 348h2v1h-2zM3 349h1v1h-1zM6 349h1v1h-1zM3 350h1v1h-1zM6 350h1v1h-1zM3 351h1v1h-1zM6 351h1v1h-1zM3 352h1v1h-1zM6 352h1v1h-1zM3 353h1v1h-1zM6 353h1v1h-1zM4 354h2v1h-2zM4 375h2v1h-2zM3 376h1v1h-1zM3 377h1v1h-1zM3 378h3v1h-3zM3 379h1v1h-1zM6 379h1v1h-1zM3 380h1v1h-1zM6 380h1v1h-1zM4 381h2v1h-2zM4 383h2v1h-2zM3 384h1v1h-1zM6 384h1v1h-1zM3 385h1v1h-1zM6 385h1v1h-1zM3 386h1v1h-1zM6 386h1v1h-1zM3 387h1v1h-1zM6 387h1v1h-1zM3 388h1v1h-1zM6 388h1v1h-1zM4 389h2v1h-2zM3 411h4v1h-4zM6 412h1v1h-1zM5 413h1v1h-1zM5 414h1v1h-1zM4 415h1v1h-1zM4 416h1v1h-1zM4 417h1v1h-1zM4 419h2v1h-2zM3 420h1v1h-1zM6 420h1v1h-1zM3 421h1v1h-1zM6 421h1v1h-1zM3 422h1v1h-1zM6 422h1v1h-1zM3 423h1v1h-1zM6 423h1v1h-1zM3 424h1v1h-1zM6 424h1v1h-1zM4 425h2v1h-2zM4 447h2v1h-2zM3 448h1v1h-1zM6 448h1v1h-1zM3 449h1v1h-1zM6 449h1v1h-1zM4 450h2v1h-2zM3 451h1v1h-1zM6 451h1v1h-1zM3 452h1v1h-1zM6 452h1v1h-1zM4 453h2v1h-2zM4 455h2v1h-2zM3 456h1v1h-1zM6 456h1v1h-1zM3 457h1v1h-1zM6 457h1v1h-1zM3 458h1v1h-1zM6 458h1v1h-1zM3 459h1v1h-1zM6 459h1v1h-1zM3 460h1v1h-1zM6 460h1v1h-1zM4 461h2v1h-2zM4 482h2v1h-2zM3 483h1v1h-1zM6 483h1v1h-1zM3 484h1v1h-1zM6 484h1v1h-1zM4 485h3v1h-3zM6 486h1v1h-1zM6 487h1v1h-1zM4 488h2v1h-2zM4 490h2v1h-2zM3 491h1v1h-1zM6 491h1v1h-1zM3 492h1v1h-1zM6 492h1v1h-1zM3 493h1v1h-1zM6 493h1v1h-1zM3 494h1v1h-1zM6 494h1v1h-1zM3 495h1v1h-1zM6 495h1v1h-1zM4 496h2v1h-2zM5 518h1v1h-1zM4 519h2v1h-2zM5 520h1v1h-1zM5 521h1v1h-1zM5 522h1v1h-1zM5 523h1v1h-1zM4 524h3v1h-3zM4 526h2v1h-2zM3 527h1v1h-1zM6 527h1v1h-1zM3 528h1v1h-1zM6 528h1v1h-1zM3 529h1v1h-1zM6 529h1v1h-1zM3 530h1v1h-1zM6 530h1v1h-1zM3 531h1v1h-1zM6 531h1v1h-1zM4 532h2v1h-2zM4 534h2v1h-2zM3 535h1v1h-1zM6 535h1v1h-1zM3 536h1v1h-1zM6 536h1v1h-1zM3 537h1v1h-1zM6 537h1v1h-1zM3 538h1v1h-1zM6 538h1v1h-1zM3 539h1v1h-1zM6 539h1v1h-1zM4 540h2v1h-2zM5 554h1v1h-1zM4 555h2v1h-2zM5 556h1v1h-1zM5 557h1v1h-1zM5 558h1v1h-1zM5 559h1v1h-1zM4 560h3v1h-3zM5 562h1v1h-1zM4 563h2v1h-2zM5 564h1v1h-1zM5 565h1v1h-1zM5 566h1v1h-1zM5 567h1v1h-1zM4 568h3v1h-3zM4 570h2v1h-2zM3 571h1v1h-1zM6 571h1v1h-1zM3 572h1v1h-1zM6 572h1v1h-1zM3 573h1v1h-1zM6 573h1v1h-1zM3 574h1v1h-1zM6 574h1v1h-1zM3 575h1v1h-1zM6 575h1v1h-1zM4 576h2v1h-2zM5 590h1v1h-1zM4 591h2v1h-2zM5 592h1v1h-1zM5 593h1v1h-1zM5 594h1v1h-1zM5 595h1v1h-1zM4 596h3v1h-3zM4 598h2v1h-2zM3 599h1v1h-1zM6 599h1v1h-1zM6 600h1v1h-1zM5 601h1v1h-1zM4 602h1v1h-1zM3 603h1v1h-1zM3 604h4v1h-4zM4 606h2v1h-2zM3 607h1v1h-1zM6 607h1v1h-1zM3 608h1v1h-1zM6 608h1v1h-1zM3 609h1v1h-1zM6 609h1v1h-1zM3 610h1v1h-1zM6 610h1v1h-1zM3 611h1v1h-1zM6 611h1v1h-1zM4 612h2v1h-2zM5 625h1v1h-1zM4 626h2v1h-2zM5 627h1v1h-1zM5 628h1v1h-1zM5 629h1v1h-1zM5 630h1v1h-1zM4 631h3v1h-3zM3 633h3v1h-3zM6 634h1v1h-1zM6 635h1v1h-1zM4 636h2v1h-2zM6 637h1v1h-1zM6 638h1v1h-1zM3 639h3v1h-3zM4 641h2v1h-2zM3 642h1v1h-1zM6 642h1v1h-1zM3 643h1v1h-1zM6 643h1v1h-1zM3 644h1v1h-1zM6 644h1v1h-1zM3 645h1v1h-1zM6 645h1v1h-1zM3 646h1v1h-1zM6 646h1v1h-1zM4 647h2v1h-2zM5 661h1v1h-1zM4 662h2v1h-2zM5 663h1v1h-1zM5 664h1v1h-1zM5 665h1v1h-1zM5 666h1v1h-1zM4 667h3v1h-3zM5 669h1v1h-1zM4 670h2v1h-2zM3 671h1v1h-1zM5 671h1v1h-1zM3 672h1v1h-1zM5 672h1v1h-1zM3 673h4v1h-4zM5 674h1v1h-1zM5 675h1v1h-1zM4 677h2v1h-2zM3 678h1v1h-1zM6 678h1v1h-1zM3 679h1v1h-1zM6 679h1v1h-1zM3 680h1v1h-1zM6 680h1v1h-1zM3 681h1v1h-1zM6 681h1v1h-1zM3 682h1v1h-1zM6 682h1v1h-1zM4 683h2v1h-2zM5 697h1v1h-1zM4 698h2v1h-2zM5 699h1v1h-1zM5 700h1v1h-1zM5 701h1v1h-1zM5 702h1v1h-1zM4 703h3v1h-3zM3 705h4v1h-4zM3 706h1v1h-1zM3 707h3v1h-3zM6 708h1v1h-1zM6 709h1v1h-1zM3 710h1v1h-1zM6 710h1v1h-1zM4 711h2v1h-2zM4 713h2v1h-2zM3 714h1v1h-1zM6 714h1v1h-1zM3 715h1v1h-1zM6 715h1v1h-1zM3 716h1v1h-1zM6 716h1v1h-1zM3 717h1v1h-1zM6 717h1v1h-1zM3 718h1v1h-1zM6 718h1v1h-1zM4 719h2v1h-2z" fill="#000"/></svg>
<!-- page -->
<div class="a" style="left:132px;top:148px;width:398px;height:552px;border:1px solid #ff5c6e"></div>
<div class="a" style="left:519px;top:161px;width:2px;height:529px;background:#000"></div>
<div class="a" style="left:145px;top:689px;width:376px;height:1px;background:#000"></div>
<div class="a" style="left:143px;top:159px;width:376px;height:530px;background:#fff;border:1px solid #000"></div>
<div class="a" style="left:154px;top:170px;width:354px;height:508px;border:1px solid #ff44ff;border-right-color:#9933ff;border-left-color:#9933ff"></div>
<!-- image frame -->
<svg class="a" style="left:262px;top:180px" width="82" height="58">
 <defs><filter id="bl" x="0" y="0" width="1" height="1"><feGaussianBlur stdDeviation="1.0" edgeMode="duplicate"/></filter><clipPath id="cp"><rect x="-5" y="0" width="80" height="50"/></clipPath></defs>
 <g transform="translate(5,5)" clip-path="url(#cp)"><rect x="-5" y="0" width="5" height="50" fill="#7a78b0"/><g filter="url(#bl)"><rect x="0" y="0" width="5" height="5" fill="#8a84b8"/><rect x="5" y="0" width="5" height="5" fill="#5a5a98"/><rect x="10" y="0" width="5" height="5" fill="#6a8ad0"/><rect x="15" y="0" width="5" height="5" fill="#6e90d8"/><rect x="20" y="0" width="5" height="5" fill="#5a80d0"/><rect x="25" y="0" width="5" height="5" fill="#5078c8"/><rect x="30" y="0" width="5" height="5" fill="#5078c8"/><rect x="35" y="0" width="5" height="5" fill="#5a80cc"/><rect x="40" y="0" width="5" height="5" fill="#5078c8"/><rect x="45" y="0" width="5" height="5" fill="#4a70c0"/><rect x="50" y="0" width="5" height="5" fill="#4a70c0"/><rect x="55" y="0" width="5" height="5" fill="#4a70c0"/><rect x="60" y="0" width="5" height="5" fill="#4a6cbc"/><rect x="65" y="0" width="5" height="5" fill="#4a6cbc"/><rect x="70" y="0" width="5" height="5" fill="#4868b8"/><rect x="0" y="5" width="5" height="5" fill="#7a78b0"/><rect x="5" y="5" width="5" height="5" fill="#4a5088"/><rect x="10" y="5" width="5" height="5" fill="#4a5aa0"/><rect x="15" y="5" width="5" height="5" fill="#8aa8e0"/><rect x="20" y="5" width="5" height="5" fill="#8aa8e0"/><rect x="25" y="5" width="5" height="5" fill="#7a9ee0"/><rect x="30" y="5" width="5" height="5" fill="#7098d8"/><rect x="35" y="5" width="5" height="5" fill="#80a0e0"/><rect x="40" y="5" width="5" height="5" fill="#7aa0dc"/><rect x="45" y="5" width="5" height="5" fill="#6e94d8"/><rect x="50" y="5" width="5" height="5" fill="#6a90d4"/><rect x="55" y="5" width="5" height="5" fill="#6890d4"/><rect x="60" y="5" width="5" height="5" fill="#6a90d0"/><rect x="65" y="5" width="5" height="5" fill="#6890d0"/><rect x="70" y="5" width="5" height="5" fill="#6088c8"/><rect x="0" y="10" width="5" height="5" fill="#9a90c0"/><rect x="5" y="10" width="5" height="5" fill="#404878"/><rect x="10" y="10" width="5" height="5" fill="#6060a8"/><rect x="15" y="10" width="5" height="5" fill="#7a7ab8"/><rect x="20" y="10" width="5" height="5" fill="#8a8ac8"/><rect x="25" y="10" width="5" height="5" fill="#7a80c0"/><rect x="30" y="10" width="5" height="5" fill="#9098d0"/><rect x="35" y="10" width="5" height="5" fill="#8aa0d8"/><rect x="40" y="10" width="5" height="5" fill="#b0c0e8"/><rect x="45" y="10" width="5" height="5" fill="#d8b060"/><rect x="50" y="10" width="5" height="5" fill="#8a90c8"/><rect x="55" y="10" width="5" height="5" fill="#c8a058"/><rect x="60" y="10" width="5" height="5" fill="#d0a850"/><rect x="65" y="10" width="5" height="5" fill="#d0a050"/><rect x="70" y="10" width="5" height="5" fill="#9a98b8"/><rect x="0" y="15" width="5" height="5" fill="#b0a8d0"/><rect x="5" y="15" width="5" height="5" fill="#5a5890"/><rect x="10" y="15" width="5" height="5" fill="#3a4080"/><rect x="15" y="15" width="5" height="5" fill="#5a60a8"/><rect x="20" y="15" width="5" height="5" fill="#6a6ab0"/><rect x="25" y="15" width="5" height="5" fill="#7a7ab8"/><rect x="30" y="15" width="5" height="5" fill="#9090c8"/><rect x="35" y="15" width="5" height="5" fill="#a8a8d8"/><rect x="40" y="15" width="5" height="5" fill="#8a88c0"/><rect x="45" y="15" width="5" height="5" fill="#8080b8"/><rect x="50" y="15" width="5" height="5" fill="#9090c0"/><rect x="55" y="15" width="5" height="5" fill="#a098c8"/><rect x="60" y="15" width="5" height="5" fill="#8a8ab8"/><rect x="65" y="15" width="5" height="5" fill="#5a7040"/><rect x="70" y="15" width="5" height="5" fill="#3a5a2a"/><rect x="0" y="20" width="5" height="5" fill="#a098c8"/><rect x="5" y="20" width="5" height="5" fill="#c0b8d8"/><rect x="10" y="20" width="5" height="5" fill="#6a6898"/><rect x="15" y="20" width="5" height="5" fill="#4a4a88"/><rect x="20" y="20" width="5" height="5" fill="#7878b0"/><rect x="25" y="20" width="5" height="5" fill="#a0a0d0"/><rect x="30" y="20" width="5" height="5" fill="#8888c0"/><rect x="35" y="20" width="5" height="5" fill="#6a6aa0"/><rect x="40" y="20" width="5" height="5" fill="#3a5a3a"/><rect x="45" y="20" width="5" height="5" fill="#2a5028"/><rect x="50" y="20" width="5" height="5" fill="#3a6030"/><rect x="55" y="20" width="5" height="5" fill="#406a30"/><rect x="60" y="20" width="5" height="5" fill="#3a6028"/><rect x="65" y="20" width="5" height="5" fill="#4a7030"/><rect x="70" y="20" width="5" height="5" fill="#3a5a28"/><rect x="0" y="25" width="5" height="5" fill="#405030"/><rect x="5" y="25" width="5" height="5" fill="#6a8840"/><rect x="10" y="25" width="5" height="5" fill="#3a70b8"/><rect x="15" y="25" width="5" height="5" fill="#5a90d8"/><rect x="20" y="25" width="5" height="5" fill="#6a9ee0"/><rect x="25" y="25" width="5" height="5" fill="#6a9ce0"/><rect x="30" y="25" width="5" height="5" fill="#5a90d8"/><rect x="35" y="25" width="5" height="5" fill="#5088d0"/><rect x="40" y="25" width="5" height="5" fill="#4a80c8"/><rect x="45" y="25" width="5" height="5" fill="#3a6aa0"/><rect x="50" y="25" width="5" height="5" fill="#5a8aa8"/><rect x="55" y="25" width="5" height="5" fill="#a8a8b0"/><rect x="60" y="25" width="5" height="5" fill="#6a8050"/><rect x="65" y="25" width="5" height="5" fill="#4a6a30"/><rect x="70" y="25" width="5" height="5" fill="#3a5a28"/><rect x="0" y="30" width="5" height="5" fill="#2a4020"/><rect x="5" y="30" width="5" height="5" fill="#6a7a38"/><rect x="10" y="30" width="5" height="5" fill="#4a88d0"/><rect x="15" y="30" width="5" height="5" fill="#5a90d8"/><rect x="20" y="30" width="5" height="5" fill="#80b0e8"/><rect x="25" y="30" width="5" height="5" fill="#6aa0e0"/><rect x="30" y="30" width="5" height="5" fill="#6aa0e0"/><rect x="35" y="30" width="5" height="5" fill="#8ab8f0"/><rect x="40" y="30" width="5" height="5" fill="#a0c0e8"/><rect x="45" y="30" width="5" height="5" fill="#d0b070"/><rect x="50" y="30" width="5" height="5" fill="#80a0d0"/><rect x="55" y="30" width="5" height="5" fill="#c0b8c8"/><rect x="60" y="30" width="5" height="5" fill="#a8a0c0"/><rect x="65" y="30" width="5" height="5" fill="#8a90a0"/><rect x="70" y="30" width="5" height="5" fill="#4a6030"/><rect x="0" y="35" width="5" height="5" fill="#3a5028"/><rect x="5" y="35" width="5" height="5" fill="#5a6830"/><rect x="10" y="35" width="5" height="5" fill="#3a80d0"/><rect x="15" y="35" width="5" height="5" fill="#4a88d8"/><rect x="20" y="35" width="5" height="5" fill="#5a98e0"/><rect x="25" y="35" width="5" height="5" fill="#6aa0e8"/><rect x="30" y="35" width="5" height="5" fill="#6aa8e8"/><rect x="35" y="35" width="5" height="5" fill="#78b0f0"/><rect x="40" y="35" width="5" height="5" fill="#70a8e8"/><rect x="45" y="35" width="5" height="5" fill="#6aa0e0"/><rect x="50" y="35" width="5" height="5" fill="#5a98e0"/><rect x="55" y="35" width="5" height="5" fill="#6890d0"/><rect x="60" y="35" width="5" height="5" fill="#a8a0c0"/><rect x="65" y="35" width="5" height="5" fill="#b0a8c8"/><rect x="70" y="35" width="5" height="5" fill="#8880a0"/><rect x="0" y="40" width="5" height="5" fill="#5a6a30"/><rect x="5" y="40" width="5" height="5" fill="#3a5020"/><rect x="10" y="40" width="5" height="5" fill="#3a78c8"/><rect x="15" y="40" width="5" height="5" fill="#4a88d8"/><rect x="20" y="40" width="5" height="5" fill="#3a80d0"/><rect x="25" y="40" width="5" height="5" fill="#4a88d8"/><rect x="30" y="40" width="5" height="5" fill="#4a90e0"/><rect x="35" y="40" width="5" height="5" fill="#5098e0"/><rect x="40" y="40" width="5" height="5" fill="#5a98e0"/><rect x="45" y="40" width="5" height="5" fill="#4a88d8"/><rect x="50" y="40" width="5" height="5" fill="#4080d0"/><rect x="55" y="40" width="5" height="5" fill="#4a88d0"/><rect x="60" y="40" width="5" height="5" fill="#5a88c8"/><rect x="65" y="40" width="5" height="5" fill="#9898c0"/><rect x="70" y="40" width="5" height="5" fill="#5a5870"/><rect x="0" y="45" width="5" height="5" fill="#6a5030"/><rect x="5" y="45" width="5" height="5" fill="#8a7040"/><rect x="10" y="45" width="5" height="5" fill="#9a90a0"/><rect x="15" y="45" width="5" height="5" fill="#6a6878"/><rect x="20" y="45" width="5" height="5" fill="#808090"/><rect x="25" y="45" width="5" height="5" fill="#4a70b0"/><rect x="30" y="45" width="5" height="5" fill="#3a78c8"/><rect x="35" y="45" width="5" height="5" fill="#3a78c8"/><rect x="40" y="45" width="5" height="5" fill="#3a78c8"/><rect x="45" y="45" width="5" height="5" fill="#3a78c8"/><rect x="50" y="45" width="5" height="5" fill="#3a78c8"/><rect x="55" y="45" width="5" height="5" fill="#3a78c8"/><rect x="60" y="45" width="5" height="5" fill="#4a80c8"/><rect x="65" y="45" width="5" height="5" fill="#4a80c8"/><rect x="70" y="45" width="5" height="5" fill="#4a70b0"/></g><g opacity="0.6">
 
 <path d="M2 20L4 24L3 34L5 40L2 50H0V20Z" fill="#1e3018"/>
 <path d="M8 26L11 30L10 36L13 42L11 50H6L8 42L6 36Z" fill="#283c1a"/>
 
 <path d="M44 11L47 9L49 11L52 10L55 12L58 11L62 12L64 14L56 14L48 14Z" fill="#e8b040"/>
 <path d="M38 10L42 9L44 11L40 12Z" fill="#e8f0ff"/>
 <path d="M40 22L48 19L56 18L64 16L70 14L75 13V26L66 28L56 26L46 25Z" fill="#28501e"/>
 
 <path d="M40 33L44 31L48 33L44 34Z" fill="#e8b048"/>
 
 
</g></g>
 <path d="M0 4.5H79.5V55.5H0" fill="none" stroke="#3c8cf8" stroke-width="1"/>
 <rect x="7.5" y="0.5" width="13" height="6" rx="3" fill="#dfe8f0" stroke="#333b48" stroke-width="1"/>
 <path d="M10 3.5H18" stroke="#222" stroke-width="1.2"/>
</svg>
<div class="a" style="left:281px;top:245px;width:42px;height:16px;border:1px solid #3c8cf8"></div>
<div class="t" style="left:294px;top:244px;font-family:'Liberation Serif',serif;font-size:16px;line-height:16px;color:#000">v3</div>
<!-- RIGHT PANEL -->
<div class="a" style="left:661px;top:106px;width:3px;height:617px;background:#5e5e5e;border-left:1px solid #6e6e6e;border-right:1px solid #6e6e6e"></div>
<div class="a" style="left:664px;top:106px;width:34px;height:617px;background:#d4d0c8"></div>
<div class="a" style="left:664px;top:106px;width:34px;height:7px;background:#878787"></div>
<div class="a" style="left:664px;top:113px;width:34px;height:4px;background:#7a7a7a"></div>
<div class="a" style="left:664px;top:117px;width:34px;height:1px;background:#5a5a5a"></div>
<div class="a" style="left:664px;top:118px;width:34px;height:11px;background:#bababa;border-top:1px solid #c8c8c8"></div>
<svg class="a" style="left:673px;top:122px" width="20" height="4" shape-rendering="crispEdges"><path d="M0.5 0V3M2.5 0V3M4.5 0V3M6.5 0V3M8.5 0V3M10.5 0V3M12.5 0V3M14.5 0V3M16.5 0V3M18.5 0V3" stroke="#4e4e4e"/><path d="M0 3.5H19" stroke="#d6d6d6" stroke-dasharray="1 1"/></svg>
<div class="a" style="left:664px;top:158px;width:34px;height:1px;background:#5a5a5a"></div>
<div class="a" style="left:664px;top:159px;width:34px;height:11px;background:#bababa;border-top:1px solid #c8c8c8"></div>
<svg class="a" style="left:673px;top:163px" width="20" height="4" shape-rendering="crispEdges"><path d="M0.5 0V3M2.5 0V3M4.5 0V3M6.5 0V3M8.5 0V3M10.5 0V3M12.5 0V3M14.5 0V3M16.5 0V3M18.5 0V3" stroke="#4e4e4e"/><path d="M0 3.5H19" stroke="#d6d6d6" stroke-dasharray="1 1"/></svg>
<div class="a" style="left:664px;top:311px;width:34px;height:1px;background:#5a5a5a"></div>
<div class="a" style="left:664px;top:312px;width:34px;height:11px;background:#bababa;border-top:1px solid #c8c8c8"></div>
<svg class="a" style="left:673px;top:316px" width="20" height="4" shape-rendering="crispEdges"><path d="M0.5 0V3M2.5 0V3M4.5 0V3M6.5 0V3M8.5 0V3M10.5 0V3M12.5 0V3M14.5 0V3M16.5 0V3M18.5 0V3" stroke="#4e4e4e"/><path d="M0 3.5H19" stroke="#d6d6d6" stroke-dasharray="1 1"/></svg>
<div class="a" style="left:664px;top:408px;width:34px;height:1px;background:#5a5a5a"></div>
<div class="a" style="left:664px;top:409px;width:34px;height:11px;background:#bababa;border-top:1px solid #c8c8c8"></div>
<svg class="a" style="left:673px;top:413px" width="20" height="4" shape-rendering="crispEdges"><path d="M0.5 0V3M2.5 0V3M4.5 0V3M6.5 0V3M8.5 0V3M10.5 0V3M12.5 0V3M14.5 0V3M16.5 0V3M18.5 0V3" stroke="#4e4e4e"/><path d="M0 3.5H19" stroke="#d6d6d6" stroke-dasharray="1 1"/></svg>
<div class="a" style="left:664px;top:560px;width:34px;height:1px;background:#5a5a5a"></div>
<div class="a" style="left:664px;top:561px;width:34px;height:11px;background:#bababa;border-top:1px solid #c8c8c8"></div>
<svg class="a" style="left:673px;top:565px" width="20" height="4" shape-rendering="crispEdges"><path d="M0.5 0V3M2.5 0V3M4.5 0V3M6.5 0V3M8.5 0V3M10.5 0V3M12.5 0V3M14.5 0V3M16.5 0V3M18.5 0V3" stroke="#4e4e4e"/><path d="M0 3.5H19" stroke="#d6d6d6" stroke-dasharray="1 1"/></svg>
<div class="a" style="left:664px;top:602px;width:34px;height:1px;background:#5a5a5a"></div>
<div class="a" style="left:664px;top:603px;width:34px;height:11px;background:#bababa;border-top:1px solid #c8c8c8"></div>
<svg class="a" style="left:673px;top:607px" width="20" height="4" shape-rendering="crispEdges"><path d="M0.5 0V3M2.5 0V3M4.5 0V3M6.5 0V3M8.5 0V3M10.5 0V3M12.5 0V3M14.5 0V3M16.5 0V3M18.5 0V3" stroke="#4e4e4e"/><path d="M0 3.5H19" stroke="#d6d6d6" stroke-dasharray="1 1"/></svg>
<div class="a" style="left:664px;top:699px;width:34px;height:1px;background:#5a5a5a"></div>
<div class="a" style="left:664px;top:700px;width:34px;height:11px;background:#bababa;border-top:1px solid #c8c8c8"></div>
<svg class="a" style="left:673px;top:704px" width="20" height="4" shape-rendering="crispEdges"><path d="M0.5 0V3M2.5 0V3M4.5 0V3M6.5 0V3M8.5 0V3M10.5 0V3M12.5 0V3M14.5 0V3M16.5 0V3M18.5 0V3" stroke="#4e4e4e"/><path d="M0 3.5H19" stroke="#d6d6d6" stroke-dasharray="1 1"/></svg>
<svg class="a" style="left:673px;top:130px" width="22" height="22"><g stroke-width="2.1" stroke-linecap="round"><path d="M10.00 5.90L10.00 1.70" stroke="#b4b4b4"/><path d="M12.40 6.54L14.50 2.91" stroke="#8a8a8a"/><path d="M14.16 8.30L17.79 6.20" stroke="#6a6a6a"/><path d="M14.80 10.70L19.00 10.70" stroke="#3a3a3a"/><path d="M14.16 13.10L17.79 15.20" stroke="#505050"/><path d="M12.40 14.86L14.50 18.49" stroke="#303030"/><path d="M10.00 15.50L10.00 19.70" stroke="#7a7a7a"/><path d="M7.60 14.86L5.50 18.49" stroke="#151515"/><path d="M5.84 13.10L2.21 15.20" stroke="#151515"/><path d="M5.20 10.70L1.00 10.70" stroke="#c4c4c4"/><path d="M5.84 8.30L2.21 6.20" stroke="#c8c8c8"/><path d="M7.60 6.54L5.50 2.91" stroke="#a0a0a0"/></g></svg>
<svg class="a" style="left:674px;top:174px" width="19" height="18"><path d="M1.5 5.5L4.5 2.5H9V15.5H1.5Z" fill="url(#pg)" stroke="#222"/><path d="M17.5 5.5L14.5 2.5H10V15.5H17.5Z" fill="url(#pg)" stroke="#222"/><path d="M9.5 0V18" stroke="#222"/><defs><linearGradient id="pg" x1="0" y1="0" x2="0" y2="1"><stop offset="0" stop-color="#fff"/><stop offset="1" stop-color="#c8c8c8"/></linearGradient></defs></svg>
<svg class="a" style="left:674px;top:201px" width="19" height="19"><path d="M9.5 7L18 12L9.5 17L1 12Z" fill="#333"/><path d="M9.5 1L18 6L9.5 11L1 6Z" fill="#e6e6e6" stroke="#aaa" stroke-width="0.6"/><path d="M9.5 5L14 8L9.5 11L5 8Z" fill="#b8b8b8"/></svg>
<svg class="a" style="left:674px;top:230px" width="19" height="17"><ellipse cx="6" cy="5" rx="4.5" ry="3.5" transform="rotate(40 6 5)" fill="none" stroke="#222" stroke-width="1.3"/><ellipse cx="13" cy="11.5" rx="4.5" ry="3.5" transform="rotate(-20 13 11.5)" fill="none" stroke="#222" stroke-width="1.3"/><circle cx="9.5" cy="9.5" r="2" fill="none" stroke="#222" stroke-width="1.2"/></svg>
<svg class="a" style="left:675px;top:257px" width="18" height="18"><rect x="5" y="5" width="12" height="12" fill="#333"/><circle cx="10.5" cy="10.5" r="4.5" fill="#fff"/><circle cx="10.5" cy="10.5" r="3" fill="#ccc"/><circle cx="5" cy="5" r="4.3" fill="#9a9a9a" stroke="#555"/></svg>
<svg class="a" style="left:674px;top:286px" width="19" height="16" shape-rendering="crispEdges"><path d="M0 0.5H19M0 3.5H19M0 12.5H19M0 15.5H19M0 6.5H4M15 6.5H19M0 9.5H4M15 9.5H19" stroke="#222"/><ellipse cx="9.5" cy="8" rx="4.5" ry="3.5" fill="#111" shape-rendering="auto"/></svg>
<svg class="a" style="left:674px;top:327px" width="19" height="17"><rect x="5.5" y="0.5" width="13" height="12" fill="#fff" stroke="#222"/><rect x="6" y="1" width="12" height="3" fill="#555"/><path d="M8 6.5H17M8 9.5H17" stroke="#444"/><rect x="3.5" y="8.5" width="6" height="6" fill="#fff" stroke="#222"/><rect x="0.5" y="10.5" width="6" height="6" fill="#fff" stroke="#222"/></svg>
<svg class="a" style="left:674px;top:354px" width="19" height="18"><rect x="5.5" y="0.5" width="13" height="12" fill="#fff" stroke="#222"/><rect x="6" y="1" width="12" height="3" fill="#555"/><rect x="12" y="4" width="6" height="8" fill="#111"/><rect x="3.5" y="8.5" width="6" height="6" fill="#fff" stroke="#222"/><rect x="0.5" y="10.5" width="6" height="6" fill="#fff" stroke="#222"/></svg>
<svg class="a" style="left:675px;top:382px" width="17" height="16"><rect x="0.5" y="0.5" width="16" height="14" fill="#fff" stroke="#222"/><rect x="1" y="1" width="15" height="4" fill="#666"/><path d="M1 5.5H16M1 8.5H16M1 11.5H16" stroke="#333"/><rect x="1" y="5" width="3" height="10" fill="#222"/></svg>
<div class="t" style="left:676px;top:424px;font-size:18px;line-height:18px;color:#333">A</div><div class="a" style="left:689px;top:425px;width:1px;height:15px;background:#111"></div>
<div class="t" style="left:678px;top:451px;font-size:18px;line-height:18px;color:#333;font-weight:bold">&para;</div>
<svg class="a" style="left:674px;top:480px" width="19" height="18"><rect x="3.5" y="8.5" width="6" height="6" fill="#fff" stroke="#222"/><rect x="0.5" y="10.5" width="6" height="6" fill="#fff" stroke="#222"/></svg>
<div class="t" style="left:680px;top:479px;font-size:17px;line-height:17px;color:#333;font-weight:bold">&para;</div>
<svg class="a" style="left:674px;top:507px" width="19" height="18"><rect x="3.5" y="8.5" width="6" height="6" fill="#fff" stroke="#222"/><rect x="0.5" y="10.5" width="6" height="6" fill="#fff" stroke="#222"/></svg>
<div class="t" style="left:679px;top:506px;font-size:17px;line-height:17px;color:#333">A</div>
<svg class="a" style="left:674px;top:535px" width="19" height="18"><path d="M6 1H18V13H6Z" fill="url(#pg)" stroke="#333"/><rect x="3.5" y="8.5" width="6" height="6" fill="#fff" stroke="#222"/><rect x="0.5" y="10.5" width="6" height="6" fill="#fff" stroke="#222"/></svg>
<svg class="a" style="left:675px;top:577px" width="17" height="17"><rect x="0.5" y="0.5" width="16" height="16" fill="url(#pg)" stroke="#444"/><path d="M3.5 8.5L7 12L13.5 3.5" fill="none" stroke="#111" stroke-width="2"/></svg>
<div class="t" style="left:675px;top:614px;font-size:13px;line-height:13px;color:#444;letter-spacing:-0.6px">abc</div>
<svg class="a" style="left:674px;top:618px" width="20" height="18"><path d="M1 9.5H9" stroke="#444" stroke-width="1.2"/><path d="M8.5 3.5V10L7 8.8Q5.5 8 5.5 9.5L9 15.5H16L17.5 11.5V9L13.5 8V5.5Q12.2 4.5 11.5 5.8V3.5Q10 2 8.5 3.5Z" fill="#fff" stroke="#222" stroke-width="0.9"/></svg>
<svg class="a" style="left:674px;top:645px" width="20" height="18"><path d="M2 4.5L8 1.5L11 3L6 8.5L4.8 11L10.5 13.5L8.5 16.5L2.5 17L1 14L2.5 10L6 5.5Z" fill="#2a2a2a"/><path d="M2 4.5L8 1.5L10 2.8L4.5 6Z" fill="#8a8a8a"/><path d="M9.5 8.5H18.5V13.5H9.5L7.5 11Z" fill="#fff" stroke="#222"/><circle cx="11" cy="11" r="0.9" fill="#222"/><path d="M13 11H17" stroke="#555" stroke-width="0.8"/></svg>
<svg class="a" style="left:675px;top:673px" width="19" height="18"><path d="M8 1.5H13L16 4.5V12H8Z" fill="#eee" stroke="#888"/><path d="M0 6.5H6M4 3.5L7.5 6.5L4 9.5Z" stroke="#111" stroke-width="1.5" fill="#111"/><circle cx="13" cy="13" r="3.5" fill="#222"/><circle cx="13" cy="13" r="1.2" fill="#fff"/><path d="M13 8.5V17.5M8.5 13H17.5M9.8 9.8L16.2 16.2M16.2 9.8L9.8 16.2" stroke="#222" stroke-width="1.4"/></svg>
<svg class="a" style="left:676px;top:715px" width="18" height="8"><rect x="1" y="3" width="8" height="6" fill="#fff" stroke="#222"/><rect x="10" y="0" width="3" height="8" fill="#333"/></svg>
<!-- /RIGHT PANEL -->
<!-- SCROLLBARS -->
<div class="a" style="left:644px;top:126px;width:2px;height:16px;background:#fff"></div>
<div class="a" style="left:646px;top:126px;width:15px;height:15px;background:#d4d0c8;border-left:1px solid #d4d0c8;border-top:1px solid #d4d0c8;border-right:1px solid #404040;border-bottom:1px solid #404040"><div class="a" style="left:0;top:0;right:0;bottom:0;border-left:1px solid #fff;border-top:1px solid #fff;border-right:1px solid #808080;border-bottom:1px solid #808080"></div></div><svg class="a" style="left:650px;top:131px" width="7" height="4"><path d="M0 4H7L3.5 0.5Z" fill="#000"/></svg>
<div class="a" style="left:646px;top:141px;width:15px;height:82px;background:repeating-conic-gradient(#d4d0c8 0 25%,#fff 0 50%) 0 0/2px 2px"></div>
<div class="a" style="left:646px;top:223px;width:15px;height:385px;background:#d4d0c8;border-left:1px solid #d4d0c8;border-top:1px solid #d4d0c8;border-right:1px solid #404040;border-bottom:1px solid #404040"><div class="a" style="left:0;top:0;right:0;bottom:0;border-left:1px solid #fff;border-top:1px solid #fff;border-right:1px solid #808080;border-bottom:1px solid #808080"></div></div><div class="a" style="left:646px;top:608px;width:15px;height:84px;background:repeating-conic-gradient(#d4d0c8 0 25%,#fff 0 50%) 0 0/2px 2px"></div>
<div class="a" style="left:646px;top:692px;width:15px;height:14px;background:#d4d0c8;border-left:1px solid #d4d0c8;border-top:1px solid #d4d0c8;border-right:1px solid #404040;border-bottom:1px solid #404040"><div class="a" style="left:0;top:0;right:0;bottom:0;border-left:1px solid #fff;border-top:1px solid #fff;border-right:1px solid #808080;border-bottom:1px solid #808080"></div></div><svg class="a" style="left:650px;top:697px" width="7" height="4"><path d="M0 0H7L3.5 3.5Z" fill="#000"/></svg>
<!-- STATUS BAR -->
<div class="a" style="left:1px;top:706px;width:660px;height:1px;background:#5a5a5a"></div>
<div class="a" style="left:1px;top:707px;width:660px;height:16px;background:#d4d0c8"></div>
<div class="a" style="left:1px;top:722px;width:660px;height:1px;background:#6a6a6a"></div>
<svg class="a" style="left:3px;top:710px" width="24" height="9"><path d="M0.5 0V8" stroke="#8a8a8a" stroke-width="1.4"/><path d="M7 0.5V7.5L2 4Z" fill="#8a8a8a"/><path d="M22.5 0.5V7.5L17.5 4Z" fill="#8a8a8a"/></svg>
<div class="a" style="left:30px;top:707px;width:82px;height:14px;background:#fff"></div>
<div class="t" style="left:30px;top:707px;font-size:11px;line-height:12px">1</div>
<div class="a" style="left:112px;top:707px;width:15px;height:14px;background:#d4d0c8;border-left:1px solid #d4d0c8;border-top:1px solid #d4d0c8;border-right:1px solid #404040;border-bottom:1px solid #404040"><div class="a" style="left:0;top:0;right:0;bottom:0;border-left:1px solid #fff;border-top:1px solid #fff;border-right:1px solid #808080;border-bottom:1px solid #808080"></div></div><svg class="a" style="left:116px;top:713px" width="7" height="4"><path d="M0 0H7L3.5 3.5Z" fill="#000"/></svg>
<div class="a" style="left:127px;top:707px;width:1px;height:15px;background:#404040"></div>
<div class="a" style="left:128px;top:707px;width:1px;height:15px;background:#fff"></div>
<svg class="a" style="left:134px;top:711px" width="22" height="8"><path d="M1 0.5V7.5L5.5 4Z" fill="#8e8e8e"/><path d="M14 0.5V7.5L18.5 4Z" fill="#8e8e8e"/><path d="M19.5 0V8" stroke="#8e8e8e" stroke-width="1.4"/></svg>
<svg class="a" style="left:164px;top:707px" width="18" height="15"><circle cx="7" cy="7.5" r="6" fill="#fff" stroke="#777" stroke-width="1.5"/><path d="M7 7.5V3M7 7.5H11L9.5 11Z" fill="none" stroke="#222" stroke-width="1.2"/><path d="M7 7.5L11 7.5A4 4 0 0 1 9.8 10.3Z" fill="#fff"/><path d="M13 12H17L15 14.5Z" fill="#222"/></svg>
<svg class="a" style="left:187px;top:708px" width="14" height="13"><defs><radialGradient id="gg" cx="0.4" cy="0.35" r="0.65"><stop offset="0" stop-color="#8cff5c"/><stop offset="0.6" stop-color="#22c41a"/><stop offset="1" stop-color="#0b6e0b"/></radialGradient></defs><circle cx="7" cy="6.7" r="5.8" fill="url(#gg)"/></svg>
<div class="t" style="left:202px;top:709px;font-size:10px;line-height:11px;letter-spacing:0px">No errors</div>
<svg class="a" style="left:263px;top:713px" width="7" height="4"><path d="M0 0H7L3.5 3.5Z" fill="#333"/></svg>
<div class="a" style="left:276px;top:707px;width:14px;height:15px;background:#d4d0c8;border-left:1px solid #d4d0c8;border-top:1px solid #d4d0c8;border-right:1px solid #404040;border-bottom:1px solid #404040"><div class="a" style="left:0;top:0;right:0;bottom:0;border-left:1px solid #fff;border-top:1px solid #fff;border-right:1px solid #808080;border-bottom:1px solid #808080"></div></div><svg class="a" style="left:280px;top:711px" width="4" height="7"><path d="M4 0V7L0.5 3.5Z" fill="#000"/></svg>
<div class="a" style="left:290px;top:707px;width:75px;height:15px;background:repeating-conic-gradient(#d4d0c8 0 25%,#fff 0 50%) 0 0/2px 2px"></div>
<div class="a" style="left:365px;top:707px;width:176px;height:15px;background:#d4d0c8;border-left:1px solid #d4d0c8;border-top:1px solid #d4d0c8;border-right:1px solid #404040;border-bottom:1px solid #404040"><div class="a" style="left:0;top:0;right:0;bottom:0;border-left:1px solid #fff;border-top:1px solid #fff;border-right:1px solid #808080;border-bottom:1px solid #808080"></div></div><div class="a" style="left:541px;top:707px;width:74px;height:15px;background:repeating-conic-gradient(#d4d0c8 0 25%,#fff 0 50%) 0 0/2px 2px"></div>
<div class="a" style="left:615px;top:707px;width:13px;height:15px;background:#d4d0c8;border-left:1px solid #d4d0c8;border-top:1px solid #d4d0c8;border-right:1px solid #404040;border-bottom:1px solid #404040"><div class="a" style="left:0;top:0;right:0;bottom:0;border-left:1px solid #fff;border-top:1px solid #fff;border-right:1px solid #808080;border-bottom:1px solid #808080"></div></div><svg class="a" style="left:619px;top:711px" width="4" height="7"><path d="M0 0V7L3.5 3.5Z" fill="#000"/></svg>
<div class="a" style="left:628px;top:707px;width:18px;height:15px;background:#d4d0c8;border-left:1px solid #d4d0c8;border-top:1px solid #d4d0c8;border-right:1px solid #404040;border-bottom:1px solid #404040"><div class="a" style="left:0;top:0;right:0;bottom:0;border-left:1px solid #fff;border-top:1px solid #fff;border-right:1px solid #808080;border-bottom:1px solid #808080"></div></div><div class="a" style="left:631px;top:709px;width:5px;height:11px;background:linear-gradient(#a0a0a0,#e0e0e0)"></div><div class="a" style="left:638px;top:709px;width:5px;height:11px;background:linear-gradient(#a0a0a0,#e0e0e0)"></div>
<svg class="a" style="left:648px;top:709px" width="12" height="12" shape-rendering="crispEdges"><path d="M10 1h1M8 3h1M10 3h1M6 5h1M8 5h1M10 5h1M4 7h1M6 7h1M8 7h1M10 7h1M2 9h1M4 9h1M6 9h1M8 9h1M10 9h1" stroke="#777"/></svg>

<!-- EDIT MENU -->
<div class="a" style="left:35px;top:54px;width:232px;height:614px;background:#d4d0c8;border-left:1px solid #d4d0c8;border-top:1px solid #d4d0c8;border-right:1px solid #404040;border-bottom:1px solid #404040"><div class="a" style="left:0;top:0;right:0;bottom:0;border-left:1px solid #fff;border-top:1px solid #fff;border-right:1px solid #808080;border-bottom:1px solid #808080"></div></div>
<!--MENUITEMS-->
<div class="t" style="left:54px;top:59px">Undo Assign Profiles</div>
<div class="t" style="right:452px;top:59px;text-align:right;letter-spacing:0.3px">Ctrl+Z</div>
<div class="t dis" style="left:54px;top:76px">Redo</div>
<div class="t dis" style="right:452px;top:76px;text-align:right;letter-spacing:0.3px">Shift+Ctrl+Z</div>
<div class="a" style="left:39px;top:94px;width:224px;height:1px;background:#808080"></div><div class="a" style="left:39px;top:95px;width:224px;height:1px;background:#fff"></div>
<div class="t dis" style="left:54px;top:102px">Cut</div>
<div class="t dis" style="right:452px;top:102px;text-align:right;letter-spacing:0.3px">Ctrl+X</div>
<div class="t dis" style="left:54px;top:119px">Copy</div>
<div class="t dis" style="right:452px;top:119px;text-align:right;letter-spacing:0.3px">Ctrl+C</div>
<div class="t" style="left:54px;top:136px">Paste</div>
<div class="t" style="right:452px;top:136px;text-align:right;letter-spacing:0.3px">Ctrl+V</div>
<div class="t" style="left:54px;top:153px">Paste without Formatting</div>
<div class="t" style="right:452px;top:153px;text-align:right;letter-spacing:0.3px">Shift+Ctrl+V</div>
<div class="t dis" style="left:54px;top:170px">Paste Into</div>
<div class="t dis" style="right:452px;top:170px;text-align:right;letter-spacing:0.3px">Alt+Ctrl+V</div>
<div class="t" style="left:54px;top:187px">Paste in Place</div>
<div class="t" style="right:452px;top:187px;text-align:right;letter-spacing:0.3px">Alt+Shift+Ctrl+V</div>
<div class="t dis" style="left:54px;top:204px">Clear</div>
<div class="t dis" style="right:452px;top:204px;text-align:right;letter-spacing:0.3px">Backspace</div>
<div class="a" style="left:39px;top:222px;width:224px;height:1px;background:#808080"></div><div class="a" style="left:39px;top:223px;width:224px;height:1px;background:#fff"></div>
<div class="t dis" style="left:54px;top:230px">Duplicate</div>
<div class="t dis" style="right:452px;top:230px;text-align:right;letter-spacing:0.3px">Alt+Shift+Ctrl+D</div>
<div class="t dis" style="left:54px;top:247px">Step and Repeat&hellip;</div>
<div class="t dis" style="right:452px;top:247px;text-align:right;letter-spacing:0.3px">Alt+Ctrl+U</div>
<div class="t dis" style="left:54px;top:264px">Place and Link</div>
<div class="a" style="left:39px;top:282px;width:224px;height:1px;background:#808080"></div><div class="a" style="left:39px;top:283px;width:224px;height:1px;background:#fff"></div>
<div class="t" style="left:54px;top:290px">Select All</div>
<div class="t" style="right:452px;top:290px;text-align:right;letter-spacing:0.3px">Ctrl+A</div>
<div class="t dis" style="left:54px;top:307px">Deselect All</div>
<div class="t dis" style="right:452px;top:307px;text-align:right;letter-spacing:0.3px">Shift+Ctrl+A</div>
<div class="a" style="left:39px;top:325px;width:224px;height:1px;background:#808080"></div><div class="a" style="left:39px;top:326px;width:224px;height:1px;background:#fff"></div>
<div class="t" style="left:54px;top:333px">InCopy</div>
<svg class="a" style="left:254px;top:336px" width="4" height="7"><path d="M0 0L4 3.5L0 7Z" fill="#000"/></svg>
<div class="a" style="left:39px;top:351px;width:224px;height:1px;background:#808080"></div><div class="a" style="left:39px;top:352px;width:224px;height:1px;background:#fff"></div>
<div class="t dis" style="left:54px;top:359px">Edit Original</div>
<div class="t" style="left:54px;top:376px">Edit With</div>
<svg class="a" style="left:254px;top:379px" width="4" height="7"><path d="M0 0L4 3.5L0 7Z" fill="#000"/></svg>
<div class="t dis" style="left:54px;top:393px">Go To Source</div>
<div class="t dis" style="left:54px;top:410px">Edit in Story Editor</div>
<div class="t dis" style="right:452px;top:410px;text-align:right;letter-spacing:0.3px">Ctrl+Y</div>
<div class="a" style="left:39px;top:428px;width:224px;height:1px;background:#808080"></div><div class="a" style="left:39px;top:429px;width:224px;height:1px;background:#fff"></div>
<div class="t" style="left:54px;top:436px">Quick Apply&hellip;</div>
<div class="t" style="right:452px;top:436px;text-align:right;letter-spacing:0.3px">Ctrl+Enter</div>
<div class="t" style="left:54px;top:453px">Find/Change&hellip;</div>
<div class="t" style="right:452px;top:453px;text-align:right;letter-spacing:0.3px">Ctrl+F</div>
<div class="t dis" style="left:54px;top:470px">Find Next</div>
<div class="t dis" style="right:452px;top:470px;text-align:right;letter-spacing:0.3px">Alt+Ctrl+F</div>
<div class="t" style="left:54px;top:487px">Spelling</div>
<svg class="a" style="left:254px;top:490px" width="4" height="7"><path d="M0 0L4 3.5L0 7Z" fill="#000"/></svg>
<div class="a" style="left:39px;top:505px;width:224px;height:1px;background:#808080"></div><div class="a" style="left:39px;top:506px;width:224px;height:1px;background:#fff"></div>
<div class="t" style="left:54px;top:513px">Transparency Blend Space</div>
<svg class="a" style="left:254px;top:516px" width="4" height="7"><path d="M0 0L4 3.5L0 7Z" fill="#000"/></svg>
<div class="t" style="left:54px;top:530px">Transparency Flattener Presets&hellip;</div>
<div class="a" style="left:39px;top:548px;width:224px;height:1px;background:#808080"></div><div class="a" style="left:39px;top:549px;width:224px;height:1px;background:#fff"></div>
<div class="t" style="left:54px;top:556px">Color Settings&hellip;</div>
<div class="t" style="left:54px;top:573px">Assign Profiles&hellip;</div>
<div class="t" style="left:54px;top:590px">Convert to Profile&hellip;</div>
<div class="a" style="left:39px;top:608px;width:224px;height:1px;background:#808080"></div><div class="a" style="left:39px;top:609px;width:224px;height:1px;background:#fff"></div>
<div class="t" style="left:54px;top:616px">Keyboard Shortcuts&hellip;</div>
<div class="t" style="left:54px;top:633px">Menus&hellip;</div>
<div class="t" style="left:54px;top:650px">Preferences</div>
<svg class="a" style="left:254px;top:653px" width="4" height="7"><path d="M0 0L4 3.5L0 7Z" fill="#000"/></svg>
<!--/MENUITEMS-->
<svg class="a" style="left:124px;top:328px" width="12" height="19" shape-rendering="crispEdges"><path d="M1 2h1v1h-1zM1 3h1v1h-1zM2 3h1v1h-1zM1 4h1v1h-1zM2 4h1v1h-1zM3 4h1v1h-1zM1 5h1v1h-1zM2 5h1v1h-1zM3 5h1v1h-1zM4 5h1v1h-1zM1 6h1v1h-1zM2 6h1v1h-1zM3 6h1v1h-1zM4 6h1v1h-1zM5 6h1v1h-1zM1 7h1v1h-1zM2 7h1v1h-1zM3 7h1v1h-1zM4 7h1v1h-1zM5 7h1v1h-1zM6 7h1v1h-1zM1 8h1v1h-1zM2 8h1v1h-1zM3 8h1v1h-1zM4 8h1v1h-1zM5 8h1v1h-1zM6 8h1v1h-1zM7 8h1v1h-1zM1 9h1v1h-1zM2 9h1v1h-1zM3 9h1v1h-1zM4 9h1v1h-1zM5 9h1v1h-1zM6 9h1v1h-1zM7 9h1v1h-1zM8 9h1v1h-1zM1 10h1v1h-1zM2 10h1v1h-1zM3 10h1v1h-1zM4 10h1v1h-1zM5 10h1v1h-1zM6 10h1v1h-1zM7 10h1v1h-1zM8 10h1v1h-1zM9 10h1v1h-1zM1 11h1v1h-1zM2 11h1v1h-1zM3 11h1v1h-1zM4 11h1v1h-1zM5 11h1v1h-1zM6 11h1v1h-1zM1 12h1v1h-1zM2 12h1v1h-1zM3 12h1v1h-1zM5 12h1v1h-1zM6 12h1v1h-1zM1 13h1v1h-1zM2 13h1v1h-1zM5 13h1v1h-1zM6 13h1v1h-1zM1 14h1v1h-1zM6 14h1v1h-1zM7 14h1v1h-1zM6 15h1v1h-1zM7 15h1v1h-1zM7 16h1v1h-1zM8 16h1v1h-1zM7 17h1v1h-1zM8 17h1v1h-1z" fill="#fff"/><path d="M0 0h1v1h-1zM0 1h1v1h-1zM1 1h1v1h-1zM0 2h1v1h-1zM2 2h1v1h-1zM0 3h1v1h-1zM3 3h1v1h-1zM0 4h1v1h-1zM4 4h1v1h-1zM0 5h1v1h-1zM5 5h1v1h-1zM0 6h1v1h-1zM6 6h1v1h-1zM0 7h1v1h-1zM7 7h1v1h-1zM0 8h1v1h-1zM8 8h1v1h-1zM0 9h1v1h-1zM9 9h1v1h-1zM0 10h1v1h-1zM10 10h1v1h-1zM0 11h1v1h-1zM7 11h1v1h-1zM8 11h1v1h-1zM9 11h1v1h-1zM10 11h1v1h-1zM11 11h1v1h-1zM0 12h1v1h-1zM4 12h1v1h-1zM7 12h1v1h-1zM0 13h1v1h-1zM3 13h1v1h-1zM4 13h1v1h-1zM7 13h1v1h-1zM0 14h1v1h-1zM2 14h1v1h-1zM5 14h1v1h-1zM8 14h1v1h-1zM0 15h1v1h-1zM1 15h1v1h-1zM5 15h1v1h-1zM8 15h1v1h-1zM0 16h1v1h-1zM6 16h1v1h-1zM9 16h1v1h-1zM6 17h1v1h-1zM9 17h1v1h-1zM7 18h1v1h-1zM8 18h1v1h-1z" fill="#000"/></svg>


</body></html>
